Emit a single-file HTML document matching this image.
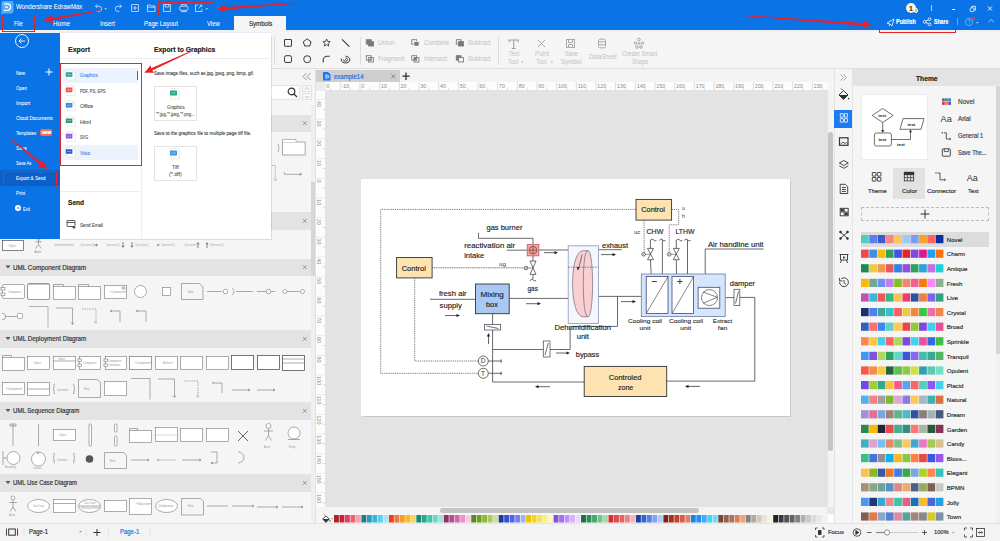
<!DOCTYPE html>
<html><head><meta charset="utf-8">
<style>
*{margin:0;padding:0;box-sizing:border-box}
html,body{width:1000px;height:541px;overflow:hidden;background:#f5f5f5;font-family:"Liberation Sans",sans-serif;color:#333}
.a{position:absolute}
.t{position:absolute;white-space:nowrap;line-height:1;-webkit-text-stroke:0.18px currentColor}
svg{position:absolute;overflow:visible}
.w{color:#fff}
.gr{color:#b9b9b9}
</style></head><body>
<!-- ===== TITLE BAR ===== -->
<div class="a" style="left:0;top:0;width:1000px;height:30px;background:#0a73e6"></div>
<div class="a" style="left:0;top:30px;width:1000px;height:2px;background:#f0f0f0"></div>
<!-- logo -->
<svg style="left:0;top:0" width="15" height="15"><path d="M3 1h8.5a2 2 0 0 1 2 2v8.5a2 2 0 0 1-2 2H4l-2.5 1.2V3a2 2 0 0 1 1.5-2z" fill="#5aacf7"/><path d="M4 3.8h3.3a3.3 3.3 0 0 1 0 6.6H4 M5 7.1h3" stroke="#fff" stroke-width="1.3" fill="none"/></svg>
<!-- quick access icons -->
<svg style="left:92px;top:2px" width="130" height="12" fill="none" stroke="#e6f0fd" stroke-width="0.75">
 <path d="M3.5 4.2h3.5a2.6 2.6 0 0 1 0 5.2H4.5 M3.5 4.2l1.8-1.8 M3.5 4.2l1.8 1.8"/>
 <path d="M12.3 6.3h2.6l-1.3 1.4z" fill="#cfe0fb" stroke="none"/>
 <path d="M29.5 4.2H26a2.6 2.6 0 0 0 0 5.2h1.5 M29.5 4.2l-1.8-1.8 M29.5 4.2l-1.8 1.8"/>
 <rect x="39.5" y="2.5" width="7" height="7" rx="0.5"/><path d="M43 4v4 M41 6h4"/>
 <path d="M55.5 3h2.8l1 1h3.7v5.5h-7.5z M55.5 5.2h7.5"/>
 <path d="M71.5 2.5h7v7h-7z M73.2 2.5v2.5h3.6v-2.5"/>
 <rect x="87.5" y="4.2" width="8.5" height="4.2" rx="1.8"/><path d="M89.3 4.2v-1.5h5v1.5 M89.3 8.4v1.3h5v-1.3"/>
 <path d="M106 3h-2.5v6.5h6.5v-2.5 M106.5 6.5l3.2-3.2 M107.7 3h2v2"/>
 <path d="M113.5 6.3h2.6l-1.3 1.4z" fill="#cfe0fb" stroke="none"/>
 <path d="M126 4.5v1 M126 7v1" stroke="#9cc3f4"/>
</svg>
<!-- red box on quick icons -->
<div class="a" style="left:158px;top:2px;width:56px;height:14px;border:1.8px solid #e3242b"></div>
<!-- tabs -->
<div class="a" style="left:1.5px;top:15px;width:33.5px;height:16.8px;border:1.8px solid #e3242b"></div>
<div class="a" style="left:234px;top:16px;width:52px;height:16px;background:#f5f5f5"></div>
<!-- right side title -->
<div class="a" style="left:905.5px;top:3px;width:10px;height:10px;border-radius:50%;background:#fdf3dc"></div>
<div class="a" style="left:913.5px;top:8px;width:4.5px;height:4.5px;border-radius:50%;background:#f5a623;border:0.7px solid #fff"></div>
<div class="a" style="left:931px;top:4.5px;width:1px;height:6px;background:#a8cdf6"></div>
<div class="a" style="left:952px;top:9.3px;width:3.2px;height:1px;background:#fff"></div>
<svg style="left:968px;top:4px" width="10" height="10" fill="none" stroke="#fff" stroke-width="0.8"><rect x="2.2" y="3.8" width="3.8" height="3.8" rx="0.8"/><path d="M3.8 3.8v-1.5h3.8v3.8h-1.5"/></svg>
<svg style="left:986px;top:4px" width="8" height="8" fill="none" stroke="#fff" stroke-width="0.9"><path d="M2 2.5l4 4 M6 2.5l-4 4"/></svg>
<div class="a" style="left:879px;top:13px;width:77px;height:20px;border:1.8px solid #e3242b"></div>
<svg style="left:886px;top:18px" width="10" height="9" fill="none" stroke="#fff" stroke-width="0.8"><path d="M1 5l7-4-2 7-2-2z M4 6l-1 2"/></svg>
<svg style="left:922px;top:17px" width="11" height="10" fill="none" stroke="#fff" stroke-width="0.8"><circle cx="2.8" cy="4.8" r="1.4"/><circle cx="7.6" cy="2.2" r="1.4"/><circle cx="7.6" cy="7.4" r="1.4"/><path d="M4 4.1l2.3-1.2 M4 5.5l2.3 1.2"/></svg>
<div class="a" style="left:956.5px;top:18px;width:1px;height:7px;background:#6aa6ee"></div>
<svg style="left:964px;top:16px" width="20" height="14" fill="none" stroke="#8dbcf3" stroke-width="0.7"><circle cx="5" cy="6" r="3.6"/><path d="M4 4.9a1.1 1.1 0 1 1 1.5 1v0.8 M5 7.6v0.5"/><circle cx="9.6" cy="2.4" r="1.3" fill="#f04040" stroke="none"/><path d="M12 6h2.6l-1.3 1.4z" fill="#cfe0fb" stroke="none"/></svg>
<svg style="left:986px;top:17px" width="10" height="8" fill="none" stroke="#cfe0fb" stroke-width="0.8"><path d="M2.5 5l2.6-2.5 2.6 2.5"/></svg>
<!-- ===== TOOLBAR ===== -->
<div class="a" style="left:0;top:68px;width:1000px;height:1px;background:#dedede"></div>
<div class="a" style="left:274px;top:37px;width:1px;height:28px;background:#dcdcdc"></div>
<div class="a" style="left:360px;top:37px;width:1px;height:28px;background:#dcdcdc"></div>
<div class="a" style="left:498px;top:37px;width:1px;height:28px;background:#dcdcdc"></div>
<svg style="left:282px;top:37px" width="72" height="28" fill="none" stroke="#3a3a3a" stroke-width="1">
 <rect x="2.5" y="2.5" width="7" height="6.8" rx="0.4"/>
 <path d="M25.2 1.9L29.1 4.8 27.7 9H22.7L21.3 4.8z" stroke-linejoin="round"/>
 <path d="M44.6 2l1 2.4 2.6.3-2 1.7.6 2.6-2.2-1.3-2.2 1.3.6-2.6-2-1.7 2.6-.3z" stroke-linejoin="round" stroke-width="0.9"/>
 <path d="M60 2.4L67.4 9.6" stroke-width="1.1"/>
 <rect x="2.5" y="18.7" width="7" height="6.8" rx="1.6"/>
 <circle cx="25.2" cy="22.2" r="3.5"/>
 <path d="M41.2 25.6V23.2a4 4 0 0 1 4-4h2.6" stroke-width="1.1"/>
 <path d="M59.4 21.6A4.3 3.4 0 1 0 63.6 19.2" stroke-width="1"/><path d="M61.4 22.6a2.1 1.7 0 1 0 2.1-1.7" stroke-width="0.9"/><circle cx="63.4" cy="22.6" r="0.5" fill="#3a3a3a" stroke="none"/>
</svg>
<svg style="left:0;top:0" width="500" height="70" stroke-width="0.9"><rect x="366.3" y="39.7" width="4.8" height="4.4" fill="#7a7a7a" stroke="#7a7a7a"/><rect x="368.6" y="41.6" width="4.8" height="4.4" fill="#7a7a7a" stroke="#7a7a7a"/><rect x="411.8" y="39.7" width="4.8" height="4.4" fill="none" stroke="#7a7a7a"/><rect x="414.1" y="41.6" width="4.8" height="4.4" fill="#7a7a7a" stroke="#f5f5f5" stroke-width="0.8"/><rect x="414.6" y="42.1" width="3.8" height="3.4" fill="#7a7a7a"/><rect x="456.3" y="39.7" width="4.8" height="4.4" fill="none" stroke="#7a7a7a"/><rect x="458.6" y="41.6" width="4.8" height="4.4" fill="#7a7a7a" stroke="#7a7a7a"/><rect x="366.3" y="55.7" width="4.8" height="4.4" fill="none" stroke="#7a7a7a"/><rect x="368.6" y="57.6" width="4.8" height="4.4" fill="none" stroke="#7a7a7a"/><path d="M368.6 60.1h2.5v-2.5" stroke="#7a7a7a" fill="none"/><rect x="411.8" y="55.7" width="4.8" height="4.4" fill="none" stroke="#7a7a7a"/><rect x="414.1" y="57.6" width="4.8" height="4.4" fill="none" stroke="#7a7a7a"/><rect x="414.1" y="57.6" width="2.5" height="2.5" fill="#7a7a7a"/><rect x="456.3" y="55.7" width="4.8" height="4.4" fill="#7a7a7a" stroke="#7a7a7a"/><rect x="458.6" y="57.6" width="4.8" height="4.4" fill="#f5f5f5" stroke="#7a7a7a"/></svg>
<svg style="left:500px;top:36px" width="160" height="16" fill="none" stroke="#a8a8a8" stroke-width="1">
 <path d="M9.2 6.2v-2.2h9v2.2 M13.7 4v8.5 M11.8 12.5h3.8" stroke="#a0a0a0" stroke-width="1.1"/>
 <path d="M38 4l7 7 M45 4l-7 7"/>
 <rect x="66.5" y="3.5" width="8" height="8"/><path d="M68.5 3.5v3h4v-3 M68.5 11.5v-3h4v3"/>
 <ellipse cx="102" cy="4.5" rx="3.5" ry="1.5"/><path d="M98.5 4.5v6a3.5 1.5 0 0 0 7 0v-6 M98.5 7.5a3.5 1.5 0 0 0 7 0"/>
 <circle cx="139" cy="3.5" r="1.3"/><circle cx="135.5" cy="7" r="1.3"/><circle cx="142.5" cy="7" r="1.3"/><circle cx="137" cy="11" r="1.3"/><circle cx="141" cy="11" r="1.3"/><circle cx="139" cy="7.5" r="1"/>
</svg>
<svg style="left:518px;top:60px" width="40" height="5" fill="#b0b0b0"><path d="M3 1.5h2.6l-1.3 1.5z M32.5 1.5h2.6l-1.3 1.5z"/></svg>
<!-- ===== LEFT PANEL ===== -->
<div class="a" style="left:0;top:69px;width:316px;height:454px;background:#f5f5f5;border-right:1px solid #e2e2e2"></div>
<svg style="left:302px;top:72px" width="10" height="9" fill="none" stroke="#777" stroke-width="0.8"><path d="M4.5 1l-3.5 3.5 3.5 3.5 M8.5 1l-3.5 3.5 3.5 3.5"/></svg>
<div class="a" style="left:200px;top:85px;width:100px;height:15px;background:#fff;border:1px solid #e4e4e4"></div>
<svg style="left:287px;top:87px" width="11" height="11" fill="none" stroke="#333" stroke-width="1.2"><circle cx="4.5" cy="4.5" r="3.3"/><path d="M7 7l3 3"/></svg>
<div class="a" style="left:302px;top:85px;width:10px;height:7px;border:1px solid #e2e2e2;background:#f8f8f8"></div>
<div class="a" style="left:302px;top:93px;width:10px;height:7px;border:1px solid #e2e2e2;background:#f8f8f8"></div>
<svg style="left:302px;top:85px" width="10" height="16" fill="none" stroke="#999" stroke-width="0.6"><path d="M3 4.5l2-2 2 2 M3 11l2 2 2-2"/></svg>
<!-- scrollbar -->
<div class="a" style="left:311px;top:105px;width:4px;height:418px;background:#efefef"></div>
<div class="a" style="left:311px;top:182px;width:4px;height:94px;background:#d6d6d6"></div>
<!-- section headers -->
<div class="a" style="left:0;top:115px;width:311px;height:17px;background:#e3e3e3"></div>
<div class="a" style="left:0;top:212px;width:311px;height:18px;background:#e3e3e3"></div>
<div class="a" style="left:0;top:259px;width:311px;height:17px;background:#e3e3e3"></div>
<div class="a" style="left:0;top:330px;width:311px;height:18px;background:#e3e3e3"></div>
<div class="a" style="left:0;top:402px;width:311px;height:18px;background:#e3e3e3"></div>
<div class="a" style="left:0;top:474px;width:311px;height:18px;background:#e3e3e3"></div>
<svg style="left:0;top:0" width="316" height="523">
 <g fill="#555"><path d="M5.5 265.5h5l-2.5 3z"/><path d="M5.5 337h5l-2.5 3z"/><path d="M5.5 409h5l-2.5 3z"/><path d="M5.5 481h5l-2.5 3z"/></g>
 <g stroke="#777" stroke-width="0.7"><path d="M303 121.5l3.6 3.6 M306.6 121.5l-3.6 3.6"/><path d="M303 219l3.6 3.6 M306.6 219l-3.6 3.6"/><path d="M303 265.5l3.6 3.6 M306.6 265.5l-3.6 3.6"/><path d="M303 337l3.6 3.6 M306.6 337l-3.6 3.6"/><path d="M303 409l3.6 3.6 M306.6 409l-3.6 3.6"/><path d="M303 481l3.6 3.6 M306.6 481l-3.6 3.6"/></g>
</svg>
<svg style="left:0;top:0" width="316" height="523" fill="none" stroke="#777" stroke-width="0.6">
 <!-- partial shapes visible right of menu (y 133-212) -->
 <path d="M277.5 144l1 0.5v2.5l1 0.8-1 0.8v2.5l-1 0.5" stroke="#888"/>
 <path d="M282.5 142h22.7v13h-22.7z" fill="#fff" stroke="#888" stroke-width="0.7"/><path d="M282.5 142v-2.6h13l1 2.6" fill="#fff" stroke="#888" stroke-width="0.6"/>
 <path d="M272 165.5h3.3v14 M273.5 178.5l1.8 2.5 1.8-2.5" stroke-dasharray="1.3 0.9" stroke="#777"/>
 <path d="M284.2 174.3h17.5 M299.5 173l2.2 1.3-2.2 1.3 M284.3 172v2" stroke="#777"/>
 <!-- row below menu -->
 <rect x="2.5" y="240.5" width="21" height="10" stroke="#333" fill="#fff"/>
 <circle cx="38.5" cy="238.5" r="1.6" fill="#fff"/><path d="M38.5 240v4.5 M35.5 241.8h6 M38.5 244.5l-3 4 M38.5 244.5l3 4"/>
 <path d="M54 244.3h20 M54 245.3h20" stroke="#bbb" stroke-width="0.6"/>
 <path d="M94 245h3 M96 244l1.5 1-1.5 1" stroke="#666" stroke-width="0.8"/>
 <path d="M123 242v5 M121.8 245.8l1.2 1.5 1.2-1.5 M132 242v5 M130.8 245.8l1.2 1.5 1.2-1.5 M198 243v5 M196.8 244.2l1.2-1.5 1.2 1.5 M207 243v5 M205.8 244.2l1.2-1.5 1.2 1.5" stroke="#555" stroke-width="0.7"/>
 <path d="M157 245h3 M158.5 244l-1.5 1 1.5 1" stroke="#777" stroke-width="0.6"/>
 <!-- component row1 -->
 <rect fill="#fff" x="2.5" y="284.5" width="22" height="14" rx="1.5"/><rect fill="#fff" x="1" y="287.5" width="4" height="2.5"/><rect fill="#fff" x="1" y="293" width="4" height="2.5"/>
 <rect fill="#fff" x="27.5" y="283.5" width="22" height="16" rx="1.5" stroke="#555"/><path d="M28.5 284.5h21v15" stroke="#999"/>
 <rect fill="#fff" x="53.5" y="286.5" width="22" height="13"/><path d="M53.5 286.5v-2h10v2"/>
 <rect fill="#fff" x="78.5" y="286.5" width="22" height="13"/><path d="M78.5 286.5v-2h10v2"/>
 <rect fill="#fff" x="104.5" y="285.5" width="22" height="13"/><path d="M122 287h3v2h-3z"/>
 <circle fill="#fff" cx="140.5" cy="291.5" r="6"/>
 <rect fill="#fff" x="162.5" y="287.5" width="8" height="8"/>
 <path d="M181.5 283.5h18l3.5 3.5v12.5h-21.5z"/>
 <path d="M207 291.5h15"/><circle fill="#fff" cx="225.5" cy="291.5" r="2.3"/>
 <path d="M232 288a4 4 0 0 1 0 7 M236 291.5h17"/>
 <path d="M257 291.5h18"/><circle fill="#fff" cx="268.5" cy="291.5" r="2.3"/>
 <circle fill="#fff" cx="285" cy="291.5" r="2"/><path d="M287 291.5h13"/><circle fill="#fff" cx="302.5" cy="291.5" r="2"/>
 <!-- component row2 -->
 <path d="M2 313a3.5 3.5 0 0 1 0 7 M5 316.5h12"/><rect fill="#fff" x="17.5" y="313.5" width="5" height="5" rx="1"/>
 <path d="M29 306.5h19v21" stroke="#888"/>
 <path d="M56 308h16.5v16 M71 322.5l1.5 2 1.5-2"/>
 <path d="M82 309h14v14 M94.5 321.5l1.5 2 1.5-2" stroke-dasharray="1.5 1"/>
 <path d="M110 311h10v11 M110.5 311l1.5-1 M110.5 311l1.5 1"/>
 <path d="M136 311h10v11 M136.5 311l1.5-1 M136.5 311l1.5 1"/>
 <!-- deployment row1 -->
 <rect fill="#fff" x="2.5" y="357.5" width="22" height="13"/><path d="M2.5 357.5v-2h9v2"/>
 <rect fill="#fff" x="27.5" y="356.5" width="22" height="13"/>
 <rect fill="#fff" x="53.5" y="356.5" width="22" height="13"/><path d="M53.5 361h22"/>
 <rect fill="#fff" x="79.5" y="356.5" width="21" height="13"/><rect fill="#fff" x="78" y="359" width="3.5" height="2.5"/><rect fill="#fff" x="78" y="364" width="3.5" height="2.5"/>
 <rect fill="#fff" x="105.5" y="356.5" width="21" height="13"/><rect fill="#fff" x="104" y="359" width="3.5" height="2.5"/><rect fill="#fff" x="104" y="364" width="3.5" height="2.5"/>
 <rect fill="#fff" x="129.5" y="356.5" width="22" height="13"/><rect fill="#fff" x="129.5" y="356.5" width="22" height="13"/>
 <rect fill="#fff" x="155.5" y="356.5" width="22" height="13"/>
 <rect fill="#fff" x="180.5" y="356.5" width="22" height="13"/>
 <rect fill="#fff" x="206.5" y="356.5" width="22" height="13"/>
 <rect fill="#fff" x="231.5" y="355.5" width="22" height="14" stroke="#555" stroke-width="0.8"/>
 <rect fill="#fff" x="257.5" y="355.5" width="22" height="14" stroke="#555" stroke-width="0.8"/>
 <rect fill="#fff" x="282.5" y="355.5" width="22" height="15" stroke="#555" stroke-width="0.8"/><path d="M282.5 359h22 M282.5 363h22"/>
 <!-- deployment row2 -->
 <rect fill="#fff" x="2.5" y="382.5" width="22" height="12"/>
 <rect fill="#fff" x="27.5" y="382.5" width="22" height="13"/><path d="M27.5 389h22"/>
 <path d="M55 384a1 1 0 0 0 -1 1v3l-1 1 1 1v3a1 1 0 0 0 1 1 M73 384a1 1 0 0 1 1 1v3l1 1-1 1v3a1 1 0 0 1-1 1"/>
 <path d="M78.5 379.5h19l3 3v15h-22z"/>
 <rect fill="#fff" x="104.5" y="381.5" width="22" height="14"/>
 <path d="M131 378.5h19v21"/>
 <path d="M158 379h16.5v18 M173 395.5l1.5 2 1.5-2"/>
 <path d="M184 381h14v16 M196.5 395.5l1.5 2 1.5-2" stroke-dasharray="1.5 1"/>
 <path d="M212 383h10v10 M212.5 383l1.5-1"/>
 <path d="M232 390h18 M248 389l2 1-2 1 M257 390h18 M273 389l2 1-2 1"/>
 <!-- sequence row1 -->
 <path d="M10 424h6 M13 424v22 M10 424v2h6v-2"/>
 <path d="M38.5 424v22"/>
 <rect fill="#fff" x="53.5" y="429.5" width="22" height="11"/>
 <rect fill="#fff" x="89" y="424" width="2.5" height="22" rx="1"/>
 <rect fill="#fff" x="114.5" y="424" width="2.5" height="8" rx="1"/><rect fill="#fff" x="114.5" y="436" width="2.5" height="10" rx="1"/>
 <rect fill="#fff" x="129.5" y="430.5" width="22" height="12"/><path d="M129.5 430.5v-2h8v2"/>
 <rect fill="#fff" x="155.5" y="427.5" width="22" height="14"/><path d="M155.5 435h22" stroke-dasharray="1 1"/>
 <rect fill="#fff" x="180.5" y="428.5" width="22" height="13"/>
 <rect fill="#fff" x="206.5" y="428.5" width="22" height="13"/>
 <path d="M238 431l10 10 M248 431l-10 10" stroke="#555" stroke-width="0.9"/>
 <circle fill="#fff" cx="268.5" cy="426" r="2.5"/><path d="M268.5 428.5v7 M264 431h9 M268.5 435.5l-3 5 M268.5 435.5l3 5"/>
 <circle fill="#fff" cx="294" cy="433" r="6"/><path d="M288 439.5h12"/>
 <!-- sequence row2 -->
 <path d="M3 451v14 M3 458h4"/><circle fill="#fff" cx="13.5" cy="458" r="6.5"/>
 <circle fill="#fff" cx="38.5" cy="459" r="7"/><path d="M37 452l2 1-2 1"/>
 <path d="M55 453a1 1 0 0 0 -1 1v3l-1 1 1 1v3a1 1 0 0 0 1 1 M73 453a1 1 0 0 1 1 1v3l1 1-1 1v3a1 1 0 0 1-1 1"/>
 <circle cx="89.5" cy="459" r="3.8" fill="#555" stroke="none"/>
 <path d="M104.5 452.5h19l3 3v13h-22z"/>
 <path d="M131 460h18 M147 459l2 1-2 1"/>
 <path d="M157 460h19 M159 459l-2 1 2 1" stroke-dasharray="1 0.6"/>
 <path d="M182 460h19 M199 459l2 1-2 1"/>
 <path d="M211 452h6v11h-6 M213 462l-2 1 2 1"/>
 <path d="M238 452a6 5.5 0 0 1 0 11"/>
 <!-- use case row -->
 <circle fill="#fff" cx="13" cy="498" r="2"/><path d="M13 500v7 M9 502.5h8 M13 507l-3 4.5 M13 507l3 4.5"/>
 <ellipse fill="#fff" cx="38.5" cy="506" rx="11" ry="6.5"/>
 <rect fill="#fff" x="53.5" y="499.5" width="22" height="13"/><path d="M53.5 503.5h22"/>
 <ellipse fill="#fff" cx="89.5" cy="506" rx="11" ry="6.5"/><path d="M79 506h21"/>
 <rect fill="#fff" x="104.5" y="500.5" width="22" height="11"/>
 <rect fill="#fff" x="129.5" y="498.5" width="22" height="16"/>
 <ellipse fill="#fff" cx="166.5" cy="506" rx="11" ry="6.5"/>
 <path d="M181.5 498.5h19l3 3v13.5h-22z"/>
 <path d="M207 506h21 M232 506h21 M252 505l2 1-2 1 M257 507h21 M276 506l2 1-2 1 M282 507h21 M301 506l2 1-2 1"/>
</svg>
<g></g>
<svg style="left:0;top:0" width="316" height="523" font-family="Liberation Sans" fill="#999" font-size="2.6">
 <text x="8.5" y="246.5">Object</text>
 <text x="8" y="293">Component</text>
 <text x="110" y="293">«Component»</text>
 <text x="188" y="293">Note</text>
 <text x="33.5" y="364">Object</text>
 <text x="83" y="364">Component</text>
 <text x="108" y="362">Component</text><text x="109" y="366">Database</text>
 <text x="58" y="359.5">Object</text>
 <text x="135" y="364">«Component»</text>
 <text x="162" y="364">«Artifact»</text>
 <text x="6" y="390">«Deployment»</text>
 <text x="84" y="390">Note</text>
 <text x="57" y="390.5">Container</text>
 <text x="59" y="436">Object</text>
 <text x="264" y="448">Actor</text>
 <text x="289" y="448">Entity</text>
 <text x="5" y="468">Boundary</text>
 <text x="33" y="469">Control</text>
 <text x="57" y="460.5">Creation</text>
 <text x="110" y="461.5">Note</text>
 <text x="9" y="516">Actor</text>
 <text x="33" y="507">Use Case</text>
 <text x="84" y="504">Use Case</text><text x="81" y="509">Extension Points</text>
 <text x="136" y="505">«Subsystem»</text>
 <text x="158" y="507">Collaboration</text>
 <text x="188" y="507">Note</text>
</svg>
<svg style="left:0;top:0" width="316" height="523" font-family="Liberation Sans" fill="#aaa" font-size="2.7">
 <text x="80" y="246">Operation()</text>
 <text x="106" y="246">Operation()</text>
 <text x="135" y="246">Operation()</text>
 <text x="161" y="246">Operation()</text>
 <text x="184" y="246">Operation()</text>
 <text x="210" y="246">Operation()</text>
 <text x="34.5" y="253" fill="#888" font-size="3">Actor</text>
</svg>
<!-- ===== TABBAR / RULERS / CANVAS ===== -->
<div class="a" style="left:316px;top:69px;width:518px;height:13px;background:#f3f3f3"></div>
<div class="a" style="left:316.4px;top:70px;width:83.3px;height:12px;background:#cfcfcf"></div>
<svg style="left:322px;top:71px" width="10" height="10"><path d="M1 1h5l2.5 2.5v6h-7.5z" fill="#1a7af0"/><path d="M3 4.2h2.4a1.4 1.4 0 0 1 0 2.8h-2.4 M3.5 5.6h2" stroke="#fff" stroke-width="0.8" fill="none"/></svg>
<svg style="left:390px;top:73px" width="7" height="7" fill="none" stroke="#666" stroke-width="0.7"><path d="M1.3 1.3l4 4 M5.3 1.3l-4 4"/></svg>
<svg style="left:401px;top:71px" width="10" height="10" fill="none" stroke="#333" stroke-width="1.3"><path d="M5 1.5v7.5 M1.3 5.2h7.4"/></svg>
<div class="a" style="left:316px;top:82px;width:512px;height:9px;background:#fcfcfc;border-bottom:1px solid #e4e4e4"></div>
<div class="a" style="left:316px;top:91px;width:10px;height:416px;background:#fcfcfc;border-right:1px solid #e4e4e4"></div>
<div class="a" style="left:326px;top:91px;width:501px;height:416px;background:#e3e3e3"></div>
<svg style="left:0;top:0" width="1000" height="541">
<g stroke="#d0d0d0" stroke-width="0.7">
<path d="M330.49 87.5V91"/>
<path d="M340.33 82V91"/>
<path d="M350.16 87.5V91"/>
<path d="M360.00 82V91"/>
<path d="M369.83 87.5V91"/>
<path d="M379.67 82V91"/>
<path d="M389.50 87.5V91"/>
<path d="M399.34 82V91"/>
<path d="M409.18 87.5V91"/>
<path d="M419.01 82V91"/>
<path d="M428.84 87.5V91"/>
<path d="M438.68 82V91"/>
<path d="M448.51 87.5V91"/>
<path d="M458.35 82V91"/>
<path d="M468.19 87.5V91"/>
<path d="M478.02 82V91"/>
<path d="M487.85 87.5V91"/>
<path d="M497.69 82V91"/>
<path d="M507.52 87.5V91"/>
<path d="M517.36 82V91"/>
<path d="M527.20 87.5V91"/>
<path d="M537.03 82V91"/>
<path d="M546.87 87.5V91"/>
<path d="M556.70 82V91"/>
<path d="M566.54 87.5V91"/>
<path d="M576.37 82V91"/>
<path d="M586.21 87.5V91"/>
<path d="M596.04 82V91"/>
<path d="M605.88 87.5V91"/>
<path d="M615.71 82V91"/>
<path d="M625.55 87.5V91"/>
<path d="M635.38 82V91"/>
<path d="M645.22 87.5V91"/>
<path d="M655.05 82V91"/>
<path d="M664.88 87.5V91"/>
<path d="M674.72 82V91"/>
<path d="M684.56 87.5V91"/>
<path d="M694.39 82V91"/>
<path d="M704.23 87.5V91"/>
<path d="M714.06 82V91"/>
<path d="M723.90 87.5V91"/>
<path d="M733.73 82V91"/>
<path d="M743.57 87.5V91"/>
<path d="M753.40 82V91"/>
<path d="M763.24 87.5V91"/>
<path d="M773.07 82V91"/>
<path d="M782.91 87.5V91"/>
<path d="M792.74 82V91"/>
<path d="M802.58 87.5V91"/>
<path d="M812.41 82V91"/>
<path d="M822.25 87.5V91"/>
<path d="M316 99.62H326" stroke="#e2e2e2"/>
<path d="M322.5 109.46H326"/>
<path d="M316 119.29H326" stroke="#e2e2e2"/>
<path d="M322.5 129.12H326"/>
<path d="M316 138.96H326" stroke="#e2e2e2"/>
<path d="M322.5 148.80H326"/>
<path d="M316 158.63H326" stroke="#e2e2e2"/>
<path d="M322.5 168.47H326"/>
<path d="M316 178.30H326" stroke="#e2e2e2"/>
<path d="M322.5 188.14H326"/>
<path d="M316 197.97H326" stroke="#e2e2e2"/>
<path d="M322.5 207.81H326"/>
<path d="M316 217.64H326" stroke="#e2e2e2"/>
<path d="M322.5 227.48H326"/>
<path d="M316 237.31H326" stroke="#e2e2e2"/>
<path d="M322.5 247.15H326"/>
<path d="M316 256.98H326" stroke="#e2e2e2"/>
<path d="M322.5 266.81H326"/>
<path d="M316 276.65H326" stroke="#e2e2e2"/>
<path d="M322.5 286.49H326"/>
<path d="M316 296.32H326" stroke="#e2e2e2"/>
<path d="M322.5 306.16H326"/>
<path d="M316 315.99H326" stroke="#e2e2e2"/>
<path d="M322.5 325.82H326"/>
<path d="M316 335.66H326" stroke="#e2e2e2"/>
<path d="M322.5 345.50H326"/>
<path d="M316 355.33H326" stroke="#e2e2e2"/>
<path d="M322.5 365.17H326"/>
<path d="M316 375.00H326" stroke="#e2e2e2"/>
<path d="M322.5 384.83H326"/>
<path d="M316 394.67H326" stroke="#e2e2e2"/>
<path d="M322.5 404.50H326"/>
<path d="M316 414.34H326" stroke="#e2e2e2"/>
<path d="M322.5 424.18H326"/>
<path d="M316 434.01H326" stroke="#e2e2e2"/>
<path d="M322.5 443.85H326"/>
<path d="M316 453.68H326" stroke="#e2e2e2"/>
<path d="M322.5 463.51H326"/>
<path d="M316 473.35H326" stroke="#e2e2e2"/>
<path d="M322.5 483.19H326"/>
<path d="M316 493.02H326" stroke="#e2e2e2"/>
<path d="M322.5 502.86H326"/>
</g>
<g fill="#8a8a8a" font-size="5.3" font-family="Liberation Sans">
<text x="341.6" y="88.2">-10</text>
<text x="361.3" y="88.2">0</text>
<text x="381.0" y="88.2">10</text>
<text x="400.6" y="88.2">20</text>
<text x="420.3" y="88.2">30</text>
<text x="440.0" y="88.2">40</text>
<text x="459.7" y="88.2">50</text>
<text x="479.3" y="88.2">60</text>
<text x="499.0" y="88.2">70</text>
<text x="518.7" y="88.2">80</text>
<text x="538.3" y="88.2">90</text>
<text x="558.0" y="88.2">100</text>
<text x="577.7" y="88.2">110</text>
<text x="597.3" y="88.2">120</text>
<text x="617.0" y="88.2">130</text>
<text x="636.7" y="88.2">140</text>
<text x="656.3" y="88.2">150</text>
<text x="676.0" y="88.2">160</text>
<text x="695.7" y="88.2">170</text>
<text x="715.4" y="88.2">180</text>
<text x="735.0" y="88.2">190</text>
<text x="754.7" y="88.2">200</text>
<text x="774.4" y="88.2">210</text>
<text x="794.0" y="88.2">220</text>
<text x="813.7" y="88.2">230</text>
<text x="326.5" y="88.2">0</text>
<text transform="translate(317.2 100.9) rotate(90)" x="0" y="0">40</text>
<text transform="translate(317.2 120.6) rotate(90)" x="0" y="0">30</text>
<text transform="translate(317.2 140.3) rotate(90)" x="0" y="0">20</text>
<text transform="translate(317.2 159.9) rotate(90)" x="0" y="0">10</text>
<text transform="translate(317.2 179.6) rotate(90)" x="0" y="0">0</text>
<text transform="translate(317.2 199.3) rotate(90)" x="0" y="0">10</text>
<text transform="translate(317.2 218.9) rotate(90)" x="0" y="0">20</text>
<text transform="translate(317.2 238.6) rotate(90)" x="0" y="0">30</text>
<text transform="translate(317.2 258.3) rotate(90)" x="0" y="0">40</text>
<text transform="translate(317.2 278.0) rotate(90)" x="0" y="0">50</text>
<text transform="translate(317.2 297.6) rotate(90)" x="0" y="0">60</text>
<text transform="translate(317.2 317.3) rotate(90)" x="0" y="0">70</text>
<text transform="translate(317.2 337.0) rotate(90)" x="0" y="0">80</text>
<text transform="translate(317.2 356.6) rotate(90)" x="0" y="0">90</text>
<text transform="translate(317.2 376.3) rotate(90)" x="0" y="0">100</text>
<text transform="translate(317.2 396.0) rotate(90)" x="0" y="0">110</text>
<text transform="translate(317.2 415.6) rotate(90)" x="0" y="0">120</text>
<text transform="translate(317.2 435.3) rotate(90)" x="0" y="0">130</text>
<text transform="translate(317.2 455.0) rotate(90)" x="0" y="0">140</text>
<text transform="translate(317.2 474.7) rotate(90)" x="0" y="0">150</text>
<text transform="translate(317.2 494.3) rotate(90)" x="0" y="0">160</text>
</g>
<rect x="316" y="82" width="9.5" height="9" fill="#ececec"/>
</svg>
<div class="a" style="left:361px;top:178.5px;width:429px;height:237.5px;background:#fff;box-shadow:0.5px 0.5px 1px rgba(0,0,0,0.12)"></div>
<div class="a" style="left:827px;top:91px;width:7px;height:416px;background:#f3f3f3;border-left:1px solid #e6e6e6"></div>
<div class="a" style="left:828px;top:132px;width:5px;height:319px;background:#c4c4c4;border-radius:3px"></div>
<div class="a" style="left:316px;top:507px;width:518px;height:7px;background:#f4f4f4"></div>
<div class="a" style="left:440px;top:508px;width:259px;height:5px;background:#c4c4c4;border-radius:3px"></div>
<div class="a" style="left:827px;top:507px;width:7px;height:7px;background:#e8e8e8"></div>
<div class="a" style="left:316px;top:514px;width:518px;height:9px;background:#f6f6f6"></div>
<svg style="left:321px;top:514px" width="13" height="9"><path d="M5 1.8l3.3 3.3-3.3 3.3-3.3-3.3z" fill="none" stroke="#333" stroke-width="0.9"/><path d="M1.7 5.1h6.6l-3.3 3.3z" fill="#333"/><path d="M4.2 1.5l-1-1" stroke="#333" stroke-width="0.7"/><circle cx="9" cy="7" r="0.7" fill="#333"/><path d="M10 4.3h2l-1 1.2z" fill="#666"/></svg>
<svg style="left:334px;top:515px" width="500" height="8">
<rect x="0.00" y="0" width="4.89" height="7.5" fill="#a52a22"/>
<rect x="5.49" y="0" width="4.89" height="7.5" fill="#c8203c"/>
<rect x="10.98" y="0" width="4.89" height="7.5" fill="#e0405e"/>
<rect x="16.47" y="0" width="4.89" height="7.5" fill="#e8607a"/>
<rect x="21.96" y="0" width="4.89" height="7.5" fill="#f2a4ac"/>
<rect x="27.45" y="0" width="4.89" height="7.5" fill="#1e7b8e"/>
<rect x="32.94" y="0" width="4.89" height="7.5" fill="#2a9fb8"/>
<rect x="38.43" y="0" width="4.89" height="7.5" fill="#35b6da"/>
<rect x="43.92" y="0" width="4.89" height="7.5" fill="#5cd0f0"/>
<rect x="49.41" y="0" width="4.89" height="7.5" fill="#a8e4f6"/>
<rect x="54.90" y="0" width="4.89" height="7.5" fill="#e84020"/>
<rect x="60.39" y="0" width="4.89" height="7.5" fill="#f07a40"/>
<rect x="65.88" y="0" width="4.89" height="7.5" fill="#f59c24"/>
<rect x="71.37" y="0" width="4.89" height="7.5" fill="#fbba1c"/>
<rect x="76.86" y="0" width="4.89" height="7.5" fill="#fcd262"/>
<rect x="82.35" y="0" width="4.89" height="7.5" fill="#1a8a72"/>
<rect x="87.84" y="0" width="4.89" height="7.5" fill="#25a98a"/>
<rect x="93.33" y="0" width="4.89" height="7.5" fill="#3dc8aa"/>
<rect x="98.82" y="0" width="4.89" height="7.5" fill="#6ad8ca"/>
<rect x="104.31" y="0" width="4.89" height="7.5" fill="#9ae6dc"/>
<rect x="109.80" y="0" width="4.89" height="7.5" fill="#8a3262"/>
<rect x="115.29" y="0" width="4.89" height="7.5" fill="#b05088"/>
<rect x="120.78" y="0" width="4.89" height="7.5" fill="#da62b2"/>
<rect x="126.27" y="0" width="4.89" height="7.5" fill="#e892c8"/>
<rect x="131.76" y="0" width="4.89" height="7.5" fill="#f2cce2"/>
<rect x="137.25" y="0" width="4.89" height="7.5" fill="#5a8a1c"/>
<rect x="142.74" y="0" width="4.89" height="7.5" fill="#6ca222"/>
<rect x="148.23" y="0" width="4.89" height="7.5" fill="#8cba32"/>
<rect x="153.72" y="0" width="4.89" height="7.5" fill="#aaca62"/>
<rect x="159.21" y="0" width="4.89" height="7.5" fill="#c8e09a"/>
<rect x="164.70" y="0" width="4.89" height="7.5" fill="#1a3aa2"/>
<rect x="170.19" y="0" width="4.89" height="7.5" fill="#3252d2"/>
<rect x="175.68" y="0" width="4.89" height="7.5" fill="#5262e2"/>
<rect x="181.17" y="0" width="4.89" height="7.5" fill="#7282f0"/>
<rect x="186.66" y="0" width="4.89" height="7.5" fill="#a2b2f8"/>
<rect x="192.15" y="0" width="4.89" height="7.5" fill="#f0c200"/>
<rect x="197.64" y="0" width="4.89" height="7.5" fill="#f8d222"/>
<rect x="203.13" y="0" width="4.89" height="7.5" fill="#fce242"/>
<rect x="208.62" y="0" width="4.89" height="7.5" fill="#fdf082"/>
<rect x="214.11" y="0" width="4.89" height="7.5" fill="#fff8c2"/>
<rect x="219.60" y="0" width="4.89" height="7.5" fill="#8252e2"/>
<rect x="225.09" y="0" width="4.89" height="7.5" fill="#a272f2"/>
<rect x="230.58" y="0" width="4.89" height="7.5" fill="#c292f6"/>
<rect x="236.07" y="0" width="4.89" height="7.5" fill="#d8b2f8"/>
<rect x="241.56" y="0" width="4.89" height="7.5" fill="#ecd8fc"/>
<rect x="247.05" y="0" width="4.89" height="7.5" fill="#1a7242"/>
<rect x="252.55" y="0" width="4.89" height="7.5" fill="#2a9252"/>
<rect x="258.04" y="0" width="4.89" height="7.5" fill="#42aa6a"/>
<rect x="263.53" y="0" width="4.89" height="7.5" fill="#72c292"/>
<rect x="269.02" y="0" width="4.89" height="7.5" fill="#a2d8b2"/>
<rect x="274.51" y="0" width="4.89" height="7.5" fill="#d03232"/>
<rect x="280.00" y="0" width="4.89" height="7.5" fill="#e04a4a"/>
<rect x="285.49" y="0" width="4.89" height="7.5" fill="#e86262"/>
<rect x="290.98" y="0" width="4.89" height="7.5" fill="#f08282"/>
<rect x="296.47" y="0" width="4.89" height="7.5" fill="#f8b2b2"/>
<rect x="301.96" y="0" width="4.89" height="7.5" fill="#1a42a2"/>
<rect x="307.45" y="0" width="4.89" height="7.5" fill="#3262d2"/>
<rect x="312.94" y="0" width="4.89" height="7.5" fill="#5282ea"/>
<rect x="318.43" y="0" width="4.89" height="7.5" fill="#82a2f2"/>
<rect x="323.92" y="0" width="4.89" height="7.5" fill="#b2caf8"/>
<rect x="329.41" y="0" width="4.89" height="7.5" fill="#822212"/>
<rect x="334.90" y="0" width="4.89" height="7.5" fill="#a83222"/>
<rect x="340.39" y="0" width="4.89" height="7.5" fill="#c24232"/>
<rect x="345.88" y="0" width="4.89" height="7.5" fill="#d26248"/>
<rect x="351.37" y="0" width="4.89" height="7.5" fill="#e28262"/>
<rect x="356.86" y="0" width="4.89" height="7.5" fill="#1a82e2"/>
<rect x="362.35" y="0" width="4.89" height="7.5" fill="#2292f2"/>
<rect x="367.84" y="0" width="4.89" height="7.5" fill="#42aaf8"/>
<rect x="373.33" y="0" width="4.89" height="7.5" fill="#42d2f2"/>
<rect x="378.82" y="0" width="4.89" height="7.5" fill="#72daf8"/>
<rect x="384.31" y="0" width="4.89" height="7.5" fill="#724a32"/>
<rect x="389.80" y="0" width="4.89" height="7.5" fill="#926252"/>
<rect x="395.29" y="0" width="4.89" height="7.5" fill="#b27252"/>
<rect x="400.78" y="0" width="4.89" height="7.5" fill="#d28262"/>
<rect x="406.27" y="0" width="4.89" height="7.5" fill="#f2a272"/>
<rect x="411.76" y="0" width="4.89" height="7.5" fill="#828282"/>
<rect x="417.25" y="0" width="4.89" height="7.5" fill="#b2aaa2"/>
<rect x="422.74" y="0" width="4.89" height="7.5" fill="#d2cab8"/>
<rect x="428.23" y="0" width="4.89" height="7.5" fill="#eae2d2"/>
<rect x="433.72" y="0" width="4.89" height="7.5" fill="#f8f2e2"/>
<rect x="439.21" y="0" width="4.89" height="7.5" fill="#222222"/>
<rect x="444.70" y="0" width="4.89" height="7.5" fill="#3a3a3a"/>
<rect x="450.19" y="0" width="4.89" height="7.5" fill="#525252"/>
<rect x="455.68" y="0" width="4.89" height="7.5" fill="#626262"/>
<rect x="461.17" y="0" width="4.89" height="7.5" fill="#828282"/>
<rect x="466.66" y="0" width="4.89" height="7.5" fill="#b2b2b2"/>
<rect x="472.15" y="0" width="4.89" height="7.5" fill="#c8c8c8"/>
<rect x="477.64" y="0" width="4.89" height="7.5" fill="#dadada"/>
<rect x="483.13" y="0" width="4.89" height="7.5" fill="#e8e8e8"/>
<rect x="488.62" y="0" width="4.89" height="7.5" fill="#f2f2f2"/>
<rect x="494.11" y="0" width="4.89" height="7.5" fill="#ffffff"/>
</svg>
<!-- ===== DIAGRAM ===== -->
<svg style="left:0;top:0" width="1000" height="541" font-family="Liberation Sans" >
<g fill="none" stroke="#555" stroke-width="0.75" stroke-dasharray="1.3 0.9">
 <path d="M636 209.4H380.7V373.3H478.3"/>
 <path d="M414.7 278V361H478.3"/>
 <path d="M644.1 220.1V252.5"/>
 <path d="M671.6 209.6H678.7V224.8H669.2V252.5"/>
</g>
<path d="M432.1 267.8H524.3" stroke="#777" stroke-width="1" stroke-dasharray="1.2 0.6" fill="none"/>
<g fill="none" stroke="#444" stroke-width="0.8">
 <!-- gas burner feed -->
 <path d="M478.5 232.9V238.3H533V244.4"/>
 <path d="M506.7 250.2H527.2"/>
 <path d="M538.9 250H568.2"/>
 <path d="M598.4 249.7H621.7"/>
 <path d="M533 256V261 M533 274.4V279"/>
 <path d="M530 281a2 2 0 0 1 3-1.5 2 2 0 0 0 3 1"/>
 <!-- main air path -->
 <path d="M430 299.3H475.5"/>
 <path d="M509.2 298.4H568.2"/>
 <path d="M598.4 296.4H641.3"/>
 <path d="M617.5 296.4V326.4H570.1V349.5H492.6"/>
 <path d="M492.6 313.7V382H584.2"/>
 <path d="M488.3 361H502 M501 359.3v3.4 M488.3 373.3H502 M501 371.6v3.4"/>
 <path d="M666.7 381.1H754.8V297.4H739.8 M725.2 297.6H734"/>
 <path d="M705.2 274V249H763.5"/>
 <!-- pipes -->
 <path d="M650.4 259.7L651.3 276.4 M650.4 248.4V240 M662.4 240V276.4 M676.3 259.7L676.6 276.4 M676.3 248.4V240 M687.5 240V276.4"/>
 <path d="M650.4 240.5a2 2 0 0 1 3-1 2 2 0 0 0 3 1 M659.5 240.5a2 2 0 0 1 3-1 2 2 0 0 0 3 1 M676.3 240.5a2 2 0 0 1 3-1 2 2 0 0 0 3 1 M684.5 240.5a2 2 0 0 1 3-1 2 2 0 0 0 3 1"/>
</g>
<!-- arrows -->
<g stroke="#222" stroke-width="0.7" fill="#222">
 <path d="M445 315.5h12" /><path d="M460 315.5l-3.5-1.6v3.2z" stroke="none"/>
 <path d="M526 303.7h12"/><path d="M541 303.7l-3.5-1.6v3.2z" stroke="none"/>
 <path d="M544 252.7h11"/><path d="M558 252.7l-3.5-1.6v3.2z" stroke="none"/>
 <path d="M601 254.6h12"/><path d="M616 254.6l-3.5-1.6v3.2z" stroke="none"/>
 <path d="M621 301.6h12"/><path d="M636 301.6l-3.5-1.6v3.2z" stroke="none"/>
 <path d="M556 353h11"/><path d="M570 353l-3.5-1.6v3.2z" stroke="none"/>
 <path d="M538 386.7h12"/><path d="M535 386.7l3.5-1.6v3.2z" stroke="none"/>
 <path d="M688 386.4h12"/><path d="M685 386.4l3.5-1.6v3.2z" stroke="none"/>
 <path d="M488.5 344v-8"/><path d="M488.5 333l-1.6 3.5h3.2z" stroke="none"/>
 <path d="M581 256q-1 8-3 13"/><path d="M577.5 271l-1.5-3.5 3 0.5z" stroke="none"/>
</g>
<!-- boxes -->
<rect x="396.6" y="257.5" width="35.5" height="20.4" fill="#fde2b2" stroke="#333" stroke-width="0.9"/>
<rect x="636" y="199.4" width="35.6" height="20.7" fill="#fde2b2" stroke="#333" stroke-width="0.9"/>
<rect x="584.2" y="366.4" width="82.5" height="30.1" fill="#fde2b2" stroke="#333" stroke-width="0.9"/>
<rect x="475.5" y="284" width="33.7" height="29.7" fill="#a9c9f5" stroke="#333" stroke-width="0.9"/>
<rect x="527.2" y="244.4" width="11.7" height="11.5" fill="#f2a4a4" stroke="#b05050" stroke-width="0.7"/>
<circle cx="533" cy="250.1" r="3.8" fill="none" stroke="#602020" stroke-width="0.6"/>
<path d="M529.2 250.1h7.6 M533 246.3v7.6" stroke="#602020" stroke-width="0.6"/>
<!-- valves -->
<g fill="#fff" stroke="#333" stroke-width="0.7">
 <path d="M530 261h6l-6 13.4h6z"/>
 <path d="M647.5 248.4h6l-6 11.3h6z"/>
 <path d="M673.3 248.4h6l-6 11.3h6z"/>
 <circle cx="526" cy="268" r="1.8"/><circle cx="643.6" cy="254.3" r="1.8"/><circle cx="669.2" cy="254.3" r="1.8"/>
</g>
<path d="M525 269l2-2 M642.6 255.3l2-2 M668.2 255.3l2-2 M527.8 268H533 M645.4 254.3H650.4 M671 254.3H676.3" stroke="#333" stroke-width="0.5"/>
<!-- D T circles -->
<circle cx="483.3" cy="361" r="5" fill="#fff" stroke="#444" stroke-width="0.8"/>
<circle cx="483.3" cy="373.3" r="5" fill="#fff" stroke="#444" stroke-width="0.8"/>
<!-- dampers -->
<rect x="484.4" y="324.4" width="16.2" height="5.6" fill="#fff" stroke="#556" stroke-width="0.8"/>
<path d="M486.5 326l12 2.5" stroke="#333" stroke-width="0.7"/>
<rect x="543.3" y="341" width="6.7" height="16" fill="#fff" stroke="#556" stroke-width="0.8"/>
<path d="M545 355l3.3-12" stroke="#333" stroke-width="0.7"/>
<rect x="734" y="289.3" width="5.8" height="16.2" fill="#fff" stroke="#556" stroke-width="0.8"/>
<path d="M735.5 303.5l3-12" stroke="#333" stroke-width="0.7"/>
<!-- dehumidifier -->
<rect x="568.2" y="245.8" width="30.2" height="77.7" fill="#f4f6fb" stroke="#8a96c0" stroke-width="0.8"/>
<path d="M583.5 250.7 C575 250.7 572.6 270 572.6 283.7 C572.6 297 575 316.7 583.5 316.7 L588 316.7 C591 316.7 592.6 300 592.6 283.7 C592.6 267 591 250.7 588 250.7Z" fill="#f8cfd2" stroke="#556" stroke-width="0.6"/>
<path d="M588 250.7 C584.5 250.7 583.3 267 583.3 283.7 C583.3 300 584.5 316.7 588 316.7" fill="none" stroke="#556" stroke-width="0.6"/>
<path d="M568.2 267.2H598.4" stroke="#333" stroke-width="0.6" stroke-dasharray="1.5 1.2"/>
<path d="M582 254.5q-1.5 8-3.5 14" stroke="#222" stroke-width="0.6" fill="none"/><path d="M577.8 270.5l-1-3.6 2.8 0.8z" fill="#222"/>
<!-- AHU -->
<rect x="641.3" y="274" width="83.9" height="42.6" fill="#d5e5fa" stroke="#6a7aa8" stroke-width="0.8"/>
<rect x="646.2" y="276.4" width="21.8" height="37.1" fill="#fff" stroke="#3a4a7a" stroke-width="0.8"/>
<rect x="672" y="276.4" width="21.6" height="37.1" fill="#fff" stroke="#3a4a7a" stroke-width="0.8"/>
<path d="M646.5 313L668 276.6 M672.3 313L693.6 276.6" stroke="#333" stroke-width="0.6"/>
<path d="M651.8 281.5h5 M677.3 281.5h5.2 M679.9 279v5.2" stroke="#222" stroke-width="0.85"/>
<rect x="698.1" y="287.3" width="21.7" height="20.9" fill="#fff" stroke="#3a4a7a" stroke-width="0.8"/>
<circle cx="709.5" cy="297.6" r="8" fill="none" stroke="#333" stroke-width="0.6"/>
<path d="M703 292L717.3 297.3 703 303.3" fill="none" stroke="#333" stroke-width="0.6"/>
<!-- texts -->
<g fill="#222" font-size="7.6" stroke="#222" stroke-width="0.15">
 <text x="401.7" y="270.6" textLength="24.2" lengthAdjust="spacingAndGlyphs">Control</text>
 <text x="641.3" y="212.3" textLength="23.6" lengthAdjust="spacingAndGlyphs">Control</text>
 <text x="486.5" y="230" textLength="35.9" lengthAdjust="spacingAndGlyphs">gas burner</text>
 <text x="464.2" y="247.8" textLength="51" lengthAdjust="spacingAndGlyphs">reactivation air</text>
 <text x="464.2" y="257.5" textLength="20" lengthAdjust="spacingAndGlyphs">intake</text>
 <text x="438.9" y="295.5" textLength="27.8" lengthAdjust="spacingAndGlyphs">fresh air</text>
 <text x="439.6" y="307.6" textLength="22.2" lengthAdjust="spacingAndGlyphs">supply</text>
 <text x="480.4" y="297.3" textLength="23.4" lengthAdjust="spacingAndGlyphs">Mixing</text>
 <text x="486" y="306.7" textLength="11.8" lengthAdjust="spacingAndGlyphs">box</text>
 <text x="527.5" y="290.5" textLength="10.5" lengthAdjust="spacingAndGlyphs">gas</text>
 <text x="602" y="248" textLength="26" lengthAdjust="spacingAndGlyphs">exhaust</text>
 <text x="554.4" y="330" textLength="56.6" lengthAdjust="spacingAndGlyphs">Dehumidification</text>
 <text x="576.7" y="338.9" textLength="12.2" lengthAdjust="spacingAndGlyphs">unit</text>
 <text x="575.8" y="357.3" textLength="23.4" lengthAdjust="spacingAndGlyphs">bypass</text>
 <text x="608.8" y="379.6" textLength="32.6" lengthAdjust="spacingAndGlyphs">Controled</text>
 <text x="617.9" y="389.5" textLength="15.4" lengthAdjust="spacingAndGlyphs">zone</text>
 <text x="646.5" y="233.5" textLength="16.9" lengthAdjust="spacingAndGlyphs">CHW</text>
 <text x="675.5" y="234.3" textLength="18.9" lengthAdjust="spacingAndGlyphs">LTHW</text>
 <text x="707.9" y="246.8" textLength="55.6" lengthAdjust="spacingAndGlyphs">Air handline unit</text>
 <text x="729.8" y="286" textLength="25.3" lengthAdjust="spacingAndGlyphs">damper</text>
</g>
<g fill="#333" font-size="5.2">
 <text x="499" y="265.5" textLength="7" lengthAdjust="spacingAndGlyphs">ug</text>
 <text x="634" y="233.5" textLength="6.2" lengthAdjust="spacingAndGlyphs">uc</text>
 <text x="682" y="210">u</text>
 <text x="682" y="218.2">h</text>
 <text x="480.8" y="363.3" font-size="6.5">D</text>
 <text x="481" y="375.6" font-size="6.5">T</text>
</g>
<g fill="#3a3030" font-size="5.6" stroke="#3a3030" stroke-width="0.12">
 <text x="628" y="322.8" textLength="34" lengthAdjust="spacingAndGlyphs">Cooling coil</text>
 <text x="639.5" y="330.3" textLength="10.9" lengthAdjust="spacingAndGlyphs">unit</text>
 <text x="668.9" y="322.8" textLength="34" lengthAdjust="spacingAndGlyphs">Cooling coil</text>
 <text x="680.3" y="330.3" textLength="10.9" lengthAdjust="spacingAndGlyphs">unit</text>
 <text x="712.8" y="322.8" textLength="19.4" lengthAdjust="spacingAndGlyphs">Extract</text>
 <text x="717.8" y="330.3" textLength="9.4" lengthAdjust="spacingAndGlyphs">fan</text>
</g>
</svg>
<!-- ===== RIGHT PANEL ===== -->
<div class="a" style="left:834px;top:69px;width:18px;height:454px;background:#f5f5f5;border-left:1px solid #e4e4e4"></div>
<div class="a" style="left:852px;top:69px;width:148px;height:454px;background:#f5f5f5;border-left:1px solid #e4e4e4"></div>
<div class="a" style="left:852px;top:69px;width:148px;height:16.5px;background:#e3e3e3"></div>
<div class="a" style="left:996px;top:85px;width:4px;height:438px;background:#f0f0f0"></div><div class="a" style="left:996px;top:86px;width:4px;height:268px;background:#d6d6d6"></div>
<div class="a" style="left:834px;top:109.5px;width:18px;height:18px;background:#1a7cf0"></div>
<svg style="left:834px;top:69px" width="18" height="230" fill="none" stroke="#333" stroke-width="0.9">
 <path d="M6.5 5.5l3 3-3 3 M9.5 5.5l3 3-3 3" stroke="#888" stroke-width="0.7"/>
 <path d="M9.5 21.5l4.5 4.5-4.5 4.5-4.5-4.5z" stroke-width="1"/><path d="M5 26h9l-4.5 4.5z" fill="#333" stroke="none"/><path d="M8.5 21l-1.5-1.5"/><circle cx="14.6" cy="29.6" r="0.8" fill="#333" stroke="none"/>
 <g stroke="#fff" stroke-width="0.8"><rect x="6.3" y="44.6" width="3" height="3.6" rx="0.2"/><rect x="10.5" y="44.6" width="3" height="3.6" rx="0.2"/><rect x="6.3" y="49.6" width="3" height="3.6" rx="0.2"/><rect x="10.5" y="49.6" width="3" height="3.6" rx="0.2"/></g>
 <rect x="5.5" y="68.8" width="8.5" height="7.5" stroke-width="1.2"/><path d="M6.5 75l2.5-2 2 1.5 1.5-1 1.2 1.2" stroke-width="0.8"/>
 <path d="M9.8 91.5l4.5 2.5-4.5 2.5-4.5-2.5z M5.3 96.8l4.5 2.5 4.5-2.5" stroke-width="0.9"/>
 <path d="M6.2 115.3h5l2.5 2.5v6.7h-7.5z M8 118.5h3.8 M8 120.5h3.8 M8 122.5h3.8" stroke-width="0.9"/>
 <rect x="6.2" y="139.3" width="8" height="7.5" stroke-width="0.9"/><path d="M6.2 143h8 M10.2 139.3v7.5" stroke-width="0.8"/><rect x="6.8" y="140" width="3" height="2.6" fill="#333" stroke="none"/><rect x="10.8" y="143.6" width="3" height="2.6" fill="#333" stroke="none"/>
 <path d="M7 163.5l6 5.5 M13 163.5l-6 5.5" stroke-width="0.9"/><circle cx="6.5" cy="163" r="0.9" fill="#333"/><circle cx="13.5" cy="163" r="0.9" fill="#333"/><circle cx="6.5" cy="169.5" r="0.9" fill="#333"/><circle cx="13.5" cy="169.5" r="0.9" fill="#333"/>
 <path d="M5.5 185.5h9 M6.5 185.5v5.5h7v-5.5 M7.5 191l-1 3 M12.5 191l1 3" stroke-width="0.9"/><path d="M9.2 187v3l2.3-1.5z" fill="#333" stroke="none"/>
 <path d="M5.6 213a4.4 4.4 0 1 0 1.4-3 M5.4 208.8v3h3 M10 211v2.8l2 1.6" stroke-width="0.9"/>
</svg>
<div class="a" style="left:861.4px;top:93.6px;width:67px;height:66.6px;background:#fff;border:1px solid #ececec"></div>
<svg style="left:861px;top:93px" width="68" height="68" font-family="Liberation Sans">
 <g fill="#fff" stroke="#333" stroke-width="0.7">
  <path d="M21.7 15.5l10.5 7-10.5 7-10.5-7z"/>
  <rect x="13.4" y="40" width="17" height="13" rx="2"/>
  <path d="M42 25.6h21l-3 10.7h-21z"/>
 </g>
 <path d="M21.7 29.5v8 M30.4 46.5h19.1v-8" stroke="#333" stroke-width="0.7" fill="none"/>
 <path d="M21.7 40l-1.5-3h3z M49.5 36.3l-1.5 3h3z" fill="#333"/>
 <g fill="#222" font-size="4.4" font-weight="bold"><text x="17.3" y="24.3">text</text><text x="17.5" y="48.2">text</text><text x="46.5" y="32.6">text</text><text x="36" y="52.5">text</text></g>
</svg>
<svg style="left:940px;top:96px" width="14" height="62" fill="none" stroke="#333" stroke-width="0.8" font-family="Liberation Sans">
 <g stroke="none"><rect x="2" y="2.3" width="2.8" height="3.1" fill="#6a6a7a"/><rect x="5.1" y="2.3" width="2.8" height="3.1" fill="#3aa060"/><rect x="8.2" y="2.3" width="2.8" height="3.1" fill="#3a80e0"/>
 <rect x="2" y="5.8" width="2.8" height="3.1" fill="#d03a7a"/><rect x="5.1" y="5.8" width="2.8" height="3.1" fill="#f08030"/><rect x="8.2" y="5.8" width="2.8" height="3.1" fill="#7a4ab0"/></g>
 <text x="0.5" y="26.2" font-size="9.2" fill="#333" stroke="none">Aa</text>
 <path d="M4 36.8H6.3V43H10.5 M9.6 42l1.2 1-1.2 1" stroke-width="0.8"/><circle cx="2.3" cy="36.8" r="0.7" fill="#333" stroke="none"/>
 <rect x="2.3" y="52.8" width="8" height="7.4" rx="0.8" stroke-width="0.9"/><path d="M4.3 52.8v2.8h4v-2.8" stroke-width="0.8"/>
</svg>
<div class="a" style="left:893px;top:168.3px;width:32px;height:31px;background:#e2e2e2"></div>
<svg style="left:860px;top:168px" width="130" height="16" fill="none" stroke="#333" stroke-width="0.8" font-family="Liberation Sans">
 <g stroke-width="0.9"><rect x="12.3" y="4.5" width="3.6" height="3.6" rx="0.3"/><rect x="17.3" y="4.5" width="3.6" height="3.6" rx="0.3"/><rect x="12.3" y="9.5" width="3.6" height="3.6" rx="0.3"/><rect x="17.3" y="9.5" width="3.6" height="3.6" rx="0.3"/></g>
 <rect x="44.3" y="4.3" width="9.4" height="8.6"/><path d="M44.3 6.6h9.4 M44.3 9.6h9.4 M47.4 6.6v6.3 M50.6 6.6v6.3" stroke-width="0.7"/><rect x="44.3" y="4.3" width="9.4" height="2.3" fill="#333"/>
 <path d="M77.5 5H80V11.8H85.3 M84.3 10.8l1.2 1-1.2 1" stroke-width="0.8"/><circle cx="76" cy="5" r="0.7" fill="#333" stroke="none"/>
 <text x="106.8" y="12.6" font-size="9" fill="#333" stroke="none">Aa</text>
</svg>
<div class="a" style="left:861.3px;top:207px;width:127.5px;height:14.4px;border:1px dashed #bdbdbd"></div>
<svg style="left:919px;top:208px" width="12" height="12"><path d="M6 1.5v9 M1.5 6h9" stroke="#333" stroke-width="1"/></svg>
<div class="a" style="left:861px;top:232px;width:128px;height:14.5px;background:#dcdcdc"></div>
<svg style="left:861px;top:235px" width="84" height="290">
<rect x="0.0" y="0.0" width="7.7" height="8.2" fill="#4ecdc4"/>
<rect x="8.3" y="0.0" width="7.7" height="8.2" fill="#5b7ff0"/>
<rect x="16.6" y="0.0" width="7.7" height="8.2" fill="#3d5bc8"/>
<rect x="24.9" y="0.0" width="7.7" height="8.2" fill="#f98585"/>
<rect x="33.2" y="0.0" width="7.7" height="8.2" fill="#fdc85a"/>
<rect x="41.5" y="0.0" width="7.7" height="8.2" fill="#9ccaf8"/>
<rect x="49.8" y="0.0" width="7.7" height="8.2" fill="#7e9cf4"/>
<rect x="58.1" y="0.0" width="7.7" height="8.2" fill="#fca021"/>
<rect x="66.4" y="0.0" width="7.7" height="8.2" fill="#fa6464"/>
<rect x="74.7" y="0.0" width="7.7" height="8.2" fill="#0d2e9e"/>
<rect x="0.0" y="14.6" width="7.7" height="8.2" fill="#f04848"/>
<rect x="8.3" y="14.6" width="7.7" height="8.2" fill="#3a8ff0"/>
<rect x="16.6" y="14.6" width="7.7" height="8.2" fill="#fdb80a"/>
<rect x="24.9" y="14.6" width="7.7" height="8.2" fill="#2ea05a"/>
<rect x="33.2" y="14.6" width="7.7" height="8.2" fill="#4050f0"/>
<rect x="41.5" y="14.6" width="7.7" height="8.2" fill="#e8202a"/>
<rect x="49.8" y="14.6" width="7.7" height="8.2" fill="#8048e0"/>
<rect x="58.1" y="14.6" width="7.7" height="8.2" fill="#e01890"/>
<rect x="66.4" y="14.6" width="7.7" height="8.2" fill="#20a0f0"/>
<rect x="74.7" y="14.6" width="7.7" height="8.2" fill="#fc7010"/>
<rect x="0.0" y="29.2" width="7.7" height="8.2" fill="#208858"/>
<rect x="8.3" y="29.2" width="7.7" height="8.2" fill="#f0c848"/>
<rect x="16.6" y="29.2" width="7.7" height="8.2" fill="#f09850"/>
<rect x="24.9" y="29.2" width="7.7" height="8.2" fill="#e85858"/>
<rect x="33.2" y="29.2" width="7.7" height="8.2" fill="#3080e8"/>
<rect x="41.5" y="29.2" width="7.7" height="8.2" fill="#9050d8"/>
<rect x="49.8" y="29.2" width="7.7" height="8.2" fill="#30a060"/>
<rect x="58.1" y="29.2" width="7.7" height="8.2" fill="#30a0d8"/>
<rect x="66.4" y="29.2" width="7.7" height="8.2" fill="#c070e0"/>
<rect x="74.7" y="29.2" width="7.7" height="8.2" fill="#20d0d8"/>
<rect x="0.0" y="43.8" width="7.7" height="8.2" fill="#fcb808"/>
<rect x="8.3" y="43.8" width="7.7" height="8.2" fill="#70a890"/>
<rect x="16.6" y="43.8" width="7.7" height="8.2" fill="#7090f0"/>
<rect x="24.9" y="43.8" width="7.7" height="8.2" fill="#c080f0"/>
<rect x="33.2" y="43.8" width="7.7" height="8.2" fill="#80c020"/>
<rect x="41.5" y="43.8" width="7.7" height="8.2" fill="#f08870"/>
<rect x="49.8" y="43.8" width="7.7" height="8.2" fill="#f06090"/>
<rect x="58.1" y="43.8" width="7.7" height="8.2" fill="#fc7808"/>
<rect x="66.4" y="43.8" width="7.7" height="8.2" fill="#fc88fc"/>
<rect x="74.7" y="43.8" width="7.7" height="8.2" fill="#90b090"/>
<rect x="0.0" y="58.4" width="7.7" height="8.2" fill="#c050b8"/>
<rect x="8.3" y="58.4" width="7.7" height="8.2" fill="#38b8d8"/>
<rect x="16.6" y="58.4" width="7.7" height="8.2" fill="#f05858"/>
<rect x="24.9" y="58.4" width="7.7" height="8.2" fill="#38b880"/>
<rect x="33.2" y="58.4" width="7.7" height="8.2" fill="#fcc050"/>
<rect x="41.5" y="58.4" width="7.7" height="8.2" fill="#e84068"/>
<rect x="49.8" y="58.4" width="7.7" height="8.2" fill="#3050a0"/>
<rect x="58.1" y="58.4" width="7.7" height="8.2" fill="#f08040"/>
<rect x="66.4" y="58.4" width="7.7" height="8.2" fill="#8060f0"/>
<rect x="74.7" y="58.4" width="7.7" height="8.2" fill="#30a080"/>
<rect x="0.0" y="73.0" width="7.7" height="8.2" fill="#1a3070"/>
<rect x="8.3" y="73.0" width="7.7" height="8.2" fill="#5080f0"/>
<rect x="16.6" y="73.0" width="7.7" height="8.2" fill="#40a898"/>
<rect x="24.9" y="73.0" width="7.7" height="8.2" fill="#38c0c8"/>
<rect x="33.2" y="73.0" width="7.7" height="8.2" fill="#f86060"/>
<rect x="41.5" y="73.0" width="7.7" height="8.2" fill="#f0c848"/>
<rect x="49.8" y="73.0" width="7.7" height="8.2" fill="#f08840"/>
<rect x="58.1" y="73.0" width="7.7" height="8.2" fill="#38c840"/>
<rect x="66.4" y="73.0" width="7.7" height="8.2" fill="#e870b0"/>
<rect x="74.7" y="73.0" width="7.7" height="8.2" fill="#f08848"/>
<rect x="0.0" y="87.6" width="7.7" height="8.2" fill="#3060c0"/>
<rect x="8.3" y="87.6" width="7.7" height="8.2" fill="#f87070"/>
<rect x="16.6" y="87.6" width="7.7" height="8.2" fill="#3a88f0"/>
<rect x="24.9" y="87.6" width="7.7" height="8.2" fill="#60d0c8"/>
<rect x="33.2" y="87.6" width="7.7" height="8.2" fill="#fdc858"/>
<rect x="41.5" y="87.6" width="7.7" height="8.2" fill="#e84848"/>
<rect x="49.8" y="87.6" width="7.7" height="8.2" fill="#90c840"/>
<rect x="58.1" y="87.6" width="7.7" height="8.2" fill="#8048d8"/>
<rect x="66.4" y="87.6" width="7.7" height="8.2" fill="#40d0f0"/>
<rect x="74.7" y="87.6" width="7.7" height="8.2" fill="#e85098"/>
<rect x="0.0" y="102.2" width="7.7" height="8.2" fill="#fc8850"/>
<rect x="8.3" y="102.2" width="7.7" height="8.2" fill="#fcc840"/>
<rect x="16.6" y="102.2" width="7.7" height="8.2" fill="#40d0f0"/>
<rect x="24.9" y="102.2" width="7.7" height="8.2" fill="#fc6060"/>
<rect x="33.2" y="102.2" width="7.7" height="8.2" fill="#b0d858"/>
<rect x="41.5" y="102.2" width="7.7" height="8.2" fill="#8048d8"/>
<rect x="49.8" y="102.2" width="7.7" height="8.2" fill="#40d0f0"/>
<rect x="58.1" y="102.2" width="7.7" height="8.2" fill="#e850a0"/>
<rect x="66.4" y="102.2" width="7.7" height="8.2" fill="#3a68e0"/>
<rect x="74.7" y="102.2" width="7.7" height="8.2" fill="#40c040"/>
<rect x="0.0" y="116.8" width="7.7" height="8.2" fill="#4098f0"/>
<rect x="8.3" y="116.8" width="7.7" height="8.2" fill="#8050e0"/>
<rect x="16.6" y="116.8" width="7.7" height="8.2" fill="#b0d860"/>
<rect x="24.9" y="116.8" width="7.7" height="8.2" fill="#30a060"/>
<rect x="33.2" y="116.8" width="7.7" height="8.2" fill="#60d8c8"/>
<rect x="41.5" y="116.8" width="7.7" height="8.2" fill="#3858e0"/>
<rect x="49.8" y="116.8" width="7.7" height="8.2" fill="#8868f0"/>
<rect x="58.1" y="116.8" width="7.7" height="8.2" fill="#40c0a8"/>
<rect x="66.4" y="116.8" width="7.7" height="8.2" fill="#38a890"/>
<rect x="74.7" y="116.8" width="7.7" height="8.2" fill="#50b860"/>
<rect x="0.0" y="131.4" width="7.7" height="8.2" fill="#fc5848"/>
<rect x="8.3" y="131.4" width="7.7" height="8.2" fill="#f09048"/>
<rect x="16.6" y="131.4" width="7.7" height="8.2" fill="#f8c848"/>
<rect x="24.9" y="131.4" width="7.7" height="8.2" fill="#206838"/>
<rect x="33.2" y="131.4" width="7.7" height="8.2" fill="#60c050"/>
<rect x="41.5" y="131.4" width="7.7" height="8.2" fill="#90c848"/>
<rect x="49.8" y="131.4" width="7.7" height="8.2" fill="#d0e048"/>
<rect x="58.1" y="131.4" width="7.7" height="8.2" fill="#30a0b0"/>
<rect x="66.4" y="131.4" width="7.7" height="8.2" fill="#60c8b0"/>
<rect x="74.7" y="131.4" width="7.7" height="8.2" fill="#70e0c8"/>
<rect x="0.0" y="146.0" width="7.7" height="8.2" fill="#7048e8"/>
<rect x="8.3" y="146.0" width="7.7" height="8.2" fill="#a0d030"/>
<rect x="16.6" y="146.0" width="7.7" height="8.2" fill="#30a890"/>
<rect x="24.9" y="146.0" width="7.7" height="8.2" fill="#fcc040"/>
<rect x="33.2" y="146.0" width="7.7" height="8.2" fill="#fc5890"/>
<rect x="41.5" y="146.0" width="7.7" height="8.2" fill="#60a0f0"/>
<rect x="49.8" y="146.0" width="7.7" height="8.2" fill="#f86868"/>
<rect x="58.1" y="146.0" width="7.7" height="8.2" fill="#50d0c0"/>
<rect x="66.4" y="146.0" width="7.7" height="8.2" fill="#9058f0"/>
<rect x="74.7" y="146.0" width="7.7" height="8.2" fill="#40d0f0"/>
<rect x="0.0" y="160.6" width="7.7" height="8.2" fill="#50b0f0"/>
<rect x="8.3" y="160.6" width="7.7" height="8.2" fill="#f88080"/>
<rect x="16.6" y="160.6" width="7.7" height="8.2" fill="#a0a0a0"/>
<rect x="24.9" y="160.6" width="7.7" height="8.2" fill="#80b830"/>
<rect x="33.2" y="160.6" width="7.7" height="8.2" fill="#e0a8d0"/>
<rect x="41.5" y="160.6" width="7.7" height="8.2" fill="#9078e0"/>
<rect x="49.8" y="160.6" width="7.7" height="8.2" fill="#fdc858"/>
<rect x="58.1" y="160.6" width="7.7" height="8.2" fill="#a0b8c8"/>
<rect x="66.4" y="160.6" width="7.7" height="8.2" fill="#40b0b0"/>
<rect x="74.7" y="160.6" width="7.7" height="8.2" fill="#d87048"/>
<rect x="0.0" y="175.2" width="7.7" height="8.2" fill="#a890d0"/>
<rect x="8.3" y="175.2" width="7.7" height="8.2" fill="#e07098"/>
<rect x="16.6" y="175.2" width="7.7" height="8.2" fill="#78a8e0"/>
<rect x="24.9" y="175.2" width="7.7" height="8.2" fill="#a08078"/>
<rect x="33.2" y="175.2" width="7.7" height="8.2" fill="#58b888"/>
<rect x="41.5" y="175.2" width="7.7" height="8.2" fill="#50b8c0"/>
<rect x="49.8" y="175.2" width="7.7" height="8.2" fill="#3050a0"/>
<rect x="58.1" y="175.2" width="7.7" height="8.2" fill="#888078"/>
<rect x="66.4" y="175.2" width="7.7" height="8.2" fill="#a8b0b8"/>
<rect x="74.7" y="175.2" width="7.7" height="8.2" fill="#485878"/>
<rect x="0.0" y="189.8" width="7.7" height="8.2" fill="#2a8a48"/>
<rect x="8.3" y="189.8" width="7.7" height="8.2" fill="#fcb808"/>
<rect x="16.6" y="189.8" width="7.7" height="8.2" fill="#202838"/>
<rect x="24.9" y="189.8" width="7.7" height="8.2" fill="#f04848"/>
<rect x="33.2" y="189.8" width="7.7" height="8.2" fill="#40b090"/>
<rect x="41.5" y="189.8" width="7.7" height="8.2" fill="#309080"/>
<rect x="49.8" y="189.8" width="7.7" height="8.2" fill="#f87878"/>
<rect x="58.1" y="189.8" width="7.7" height="8.2" fill="#a8b8a8"/>
<rect x="66.4" y="189.8" width="7.7" height="8.2" fill="#2a5838"/>
<rect x="74.7" y="189.8" width="7.7" height="8.2" fill="#883058"/>
<rect x="0.0" y="204.4" width="7.7" height="8.2" fill="#40b0c0"/>
<rect x="8.3" y="204.4" width="7.7" height="8.2" fill="#e0a0d0"/>
<rect x="16.6" y="204.4" width="7.7" height="8.2" fill="#78c0f0"/>
<rect x="24.9" y="204.4" width="7.7" height="8.2" fill="#e08868"/>
<rect x="33.2" y="204.4" width="7.7" height="8.2" fill="#80c088"/>
<rect x="41.5" y="204.4" width="7.7" height="8.2" fill="#fcc858"/>
<rect x="49.8" y="204.4" width="7.7" height="8.2" fill="#40a8d0"/>
<rect x="58.1" y="204.4" width="7.7" height="8.2" fill="#e878c0"/>
<rect x="66.4" y="204.4" width="7.7" height="8.2" fill="#a8c850"/>
<rect x="74.7" y="204.4" width="7.7" height="8.2" fill="#d8c090"/>
<rect x="0.0" y="219.0" width="7.7" height="8.2" fill="#38c080"/>
<rect x="8.3" y="219.0" width="7.7" height="8.2" fill="#4870e0"/>
<rect x="16.6" y="219.0" width="7.7" height="8.2" fill="#909090"/>
<rect x="24.9" y="219.0" width="7.7" height="8.2" fill="#08b0f0"/>
<rect x="33.2" y="219.0" width="7.7" height="8.2" fill="#fcb820"/>
<rect x="41.5" y="219.0" width="7.7" height="8.2" fill="#88c840"/>
<rect x="49.8" y="219.0" width="7.7" height="8.2" fill="#fc8040"/>
<rect x="58.1" y="219.0" width="7.7" height="8.2" fill="#e84848"/>
<rect x="66.4" y="219.0" width="7.7" height="8.2" fill="#3858e0"/>
<rect x="74.7" y="219.0" width="7.7" height="8.2" fill="#9858e8"/>
<rect x="0.0" y="233.6" width="7.7" height="8.2" fill="#fcc050"/>
<rect x="8.3" y="233.6" width="7.7" height="8.2" fill="#88b828"/>
<rect x="16.6" y="233.6" width="7.7" height="8.2" fill="#3858a8"/>
<rect x="24.9" y="233.6" width="7.7" height="8.2" fill="#e87820"/>
<rect x="33.2" y="233.6" width="7.7" height="8.2" fill="#4878e8"/>
<rect x="41.5" y="233.6" width="7.7" height="8.2" fill="#38a848"/>
<rect x="49.8" y="233.6" width="7.7" height="8.2" fill="#78a8e0"/>
<rect x="58.1" y="233.6" width="7.7" height="8.2" fill="#b0d028"/>
<rect x="66.4" y="233.6" width="7.7" height="8.2" fill="#fc8850"/>
<rect x="74.7" y="233.6" width="7.7" height="8.2" fill="#38c0c0"/>
<rect x="0.0" y="248.2" width="7.7" height="8.2" fill="#a89078"/>
<rect x="8.3" y="248.2" width="7.7" height="8.2" fill="#88a888"/>
<rect x="16.6" y="248.2" width="7.7" height="8.2" fill="#70a0a0"/>
<rect x="24.9" y="248.2" width="7.7" height="8.2" fill="#5890c8"/>
<rect x="33.2" y="248.2" width="7.7" height="8.2" fill="#e08888"/>
<rect x="41.5" y="248.2" width="7.7" height="8.2" fill="#f0a868"/>
<rect x="49.8" y="248.2" width="7.7" height="8.2" fill="#506080"/>
<rect x="58.1" y="248.2" width="7.7" height="8.2" fill="#98a860"/>
<rect x="66.4" y="248.2" width="7.7" height="8.2" fill="#806050"/>
<rect x="74.7" y="248.2" width="7.7" height="8.2" fill="#c8c8c8"/>
<rect x="0.0" y="262.8" width="7.7" height="8.2" fill="#4898f0"/>
<rect x="8.3" y="262.8" width="7.7" height="8.2" fill="#20387a"/>
<rect x="16.6" y="262.8" width="7.7" height="8.2" fill="#38a8d0"/>
<rect x="24.9" y="262.8" width="7.7" height="8.2" fill="#e88890"/>
<rect x="33.2" y="262.8" width="7.7" height="8.2" fill="#38c8a8"/>
<rect x="41.5" y="262.8" width="7.7" height="8.2" fill="#e06088"/>
<rect x="49.8" y="262.8" width="7.7" height="8.2" fill="#1a70b8"/>
<rect x="58.1" y="262.8" width="7.7" height="8.2" fill="#fcb828"/>
<rect x="66.4" y="262.8" width="7.7" height="8.2" fill="#4868d8"/>
<rect x="74.7" y="262.8" width="7.7" height="8.2" fill="#28a0e0"/>
<rect x="0.0" y="277.4" width="7.7" height="8.2" fill="#806050"/>
<rect x="8.3" y="277.4" width="7.7" height="8.2" fill="#e07850"/>
<rect x="16.6" y="277.4" width="7.7" height="8.2" fill="#88a8c8"/>
<rect x="24.9" y="277.4" width="7.7" height="8.2" fill="#5880d0"/>
<rect x="33.2" y="277.4" width="7.7" height="8.2" fill="#e088a0"/>
<rect x="41.5" y="277.4" width="7.7" height="8.2" fill="#58a098"/>
<rect x="49.8" y="277.4" width="7.7" height="8.2" fill="#a08878"/>
<rect x="58.1" y="277.4" width="7.7" height="8.2" fill="#888888"/>
<rect x="66.4" y="277.4" width="7.7" height="8.2" fill="#d8c830"/>
<rect x="74.7" y="277.4" width="7.7" height="8.2" fill="#8090a8"/>
</svg>
<!-- ===== STATUS BAR ===== -->
<div class="a" style="left:0;top:523px;width:1000px;height:18px;background:#f3f3f3;border-top:1px solid #e2e2e2"></div>
<svg style="left:0;top:524px" width="1000" height="17" fill="none" stroke="#333" stroke-width="0.8">
 <rect x="8.7" y="5" width="6.6" height="6.2" stroke-width="1"/><path d="M6.5 4.5v7.2 M17.5 4.5v7.2" stroke-width="0.9"/>
 <path d="M24 3v11 M86 3v11 M108.5 3v11 M150 3v11" stroke="#e0e0e0"/>
 <path d="M79 7h3l-1.5 1.6z" fill="#888" stroke="none"/>
 <path d="M97 5v7 M93.5 8.5h7" stroke-width="1"/>
 <path d="M815.5 6v-2h2 M822 4h2v2 M824 11v2h-2 M817.5 13h-2v-2"/><rect x="818" y="6" width="3.5" height="5" rx="1" fill="#333" stroke="none"/>
 <circle cx="857" cy="8.5" r="3.8"/><path d="M855.8 6.5v4l3-2z" fill="#333"/>
 <path d="M867 8.5h4.5"/><path d="M876 8.5h42" stroke="#ccc" stroke-width="1.2"/><path d="M876 8.5h11" stroke="#888" stroke-width="1.2"/>
 <circle cx="887" cy="8.5" r="2.6" fill="#fff" stroke="#777"/>
 <path d="M922 8.5h5 M924.5 6v5"/>
 <path d="M952 8h2.4l-1.2 1.3z" fill="#888" stroke="none"/>
 <path d="M964.5 6.5v-2.5h2.5 M970 4h2.5v2.5 M972.5 10.5v2.5h-2.5 M967 13h-2.5v-2.5"/>
 <rect x="976.5" y="4.5" width="8" height="8"/><path d="M978.5 8.5h4 M979.5 7.5l-1 1 1 1 M981.5 7.5l1 1-1 1"/>
</svg>
<!-- ===== FILE MENU ===== -->
<div class="a" style="left:0;top:32px;width:272px;height:1px;background:#e8eef8"></div>
<div class="a" style="left:0;top:33px;width:60px;height:206px;background:#0a73e6"></div>
<div class="a" style="left:60px;top:33px;width:211px;height:206px;background:#fff;box-shadow:0.5px 0.5px 1px rgba(0,0,0,0.1)"></div>
<svg style="left:14px;top:33px" width="16" height="16" fill="none" stroke="#fff" stroke-width="0.9"><circle cx="8" cy="8" r="6.5"/><path d="M11 8H5 M7.5 5.5L5 8l2.5 2.5"/></svg>
<svg style="left:45px;top:68px" width="8" height="8" fill="none" stroke="#fff" stroke-width="1"><path d="M4 0.5v7 M0.5 4h7"/></svg>
<div class="a" style="left:40px;top:129px;width:12px;height:7px;background:#f26b55;border-radius:2px"></div>
<div class="a" style="left:0;top:170px;width:60px;height:16px;background:#0b5fc6"></div>
<div class="a" style="left:3px;top:171px;width:54px;height:16.5px;border:1.8px solid #e3242b"></div>
<svg style="left:14px;top:204px" width="8" height="8"><circle cx="4" cy="4" r="3" fill="#fff"/><path d="M2.6 4h2.8 M4.4 3l1 1-1 1" stroke="#0a73e6" stroke-width="0.6" fill="none"/></svg>
<!-- export column -->
<div class="a" style="left:60px;top:58px;width:212px;height:1px;background:#eeeeee"></div>
<div class="a" style="left:141px;top:58px;width:1px;height:181px;background:#eeeeee"></div>
<div class="a" style="left:60px;top:191px;width:81px;height:1px;background:#eeeeee"></div>
<div class="a" style="left:63px;top:68px;width:75px;height:15px;background:#eaf3fe"></div>
<div class="a" style="left:137px;top:71px;width:1.2px;height:9px;background:#1a73e8"></div>
<div class="a" style="left:63px;top:145px;width:75px;height:15px;background:#eaf3fe"></div>
<svg style="left:64px;top:68px" width="14" height="95"><g transform="translate(0 0.0)"><path d="M3 2h5.8l2.4 2.4v7.6H3z" fill="#fff" stroke="#dcdcdc" stroke-width="0.6"/><path d="M8.8 2v2.4h2.4" fill="none" stroke="#dcdcdc" stroke-width="0.5"/><rect x="1.8" y="4.2" width="6.6" height="4.6" rx="0.6" fill="#2aa48a"/><path d="M3 6.5h4.2" stroke="#fff" stroke-width="0.6" opacity="0.7"/></g><g transform="translate(0 15.4)"><path d="M3 2h5.8l2.4 2.4v7.6H3z" fill="#fff" stroke="#dcdcdc" stroke-width="0.6"/><path d="M8.8 2v2.4h2.4" fill="none" stroke="#dcdcdc" stroke-width="0.5"/><rect x="1.8" y="4.2" width="6.6" height="4.6" rx="0.6" fill="#ee5a52"/><path d="M3 6.5h4.2" stroke="#fff" stroke-width="0.6" opacity="0.7"/></g><g transform="translate(0 30.8)"><path d="M3 2h5.8l2.4 2.4v7.6H3z" fill="#fff" stroke="#dcdcdc" stroke-width="0.6"/><path d="M8.8 2v2.4h2.4" fill="none" stroke="#dcdcdc" stroke-width="0.5"/><rect x="1.8" y="4.2" width="6.6" height="4.6" rx="0.6" fill="#3a86e8"/><path d="M3 6.5h4.2" stroke="#fff" stroke-width="0.6" opacity="0.7"/></g><g transform="translate(0 46.2)"><path d="M3 2h5.8l2.4 2.4v7.6H3z" fill="#fff" stroke="#dcdcdc" stroke-width="0.6"/><path d="M8.8 2v2.4h2.4" fill="none" stroke="#dcdcdc" stroke-width="0.5"/><rect x="1.8" y="4.2" width="6.6" height="4.6" rx="0.6" fill="#2a9a6a"/><path d="M3 6.5h4.2" stroke="#fff" stroke-width="0.6" opacity="0.7"/></g><g transform="translate(0 61.6)"><path d="M3 2h5.8l2.4 2.4v7.6H3z" fill="#fff" stroke="#dcdcdc" stroke-width="0.6"/><path d="M8.8 2v2.4h2.4" fill="none" stroke="#dcdcdc" stroke-width="0.5"/><rect x="1.8" y="4.2" width="6.6" height="4.6" rx="0.6" fill="#8a5ae6"/><path d="M3 6.5h4.2" stroke="#fff" stroke-width="0.6" opacity="0.7"/></g><g transform="translate(0 77.0)"><path d="M3 2h5.8l2.4 2.4v7.6H3z" fill="#fff" stroke="#dcdcdc" stroke-width="0.6"/><path d="M8.8 2v2.4h2.4" fill="none" stroke="#dcdcdc" stroke-width="0.5"/><rect x="1.8" y="4.2" width="6.6" height="4.6" rx="0.6" fill="#2a5ac8"/><path d="M3 6.5h4.2" stroke="#fff" stroke-width="0.6" opacity="0.7"/></g></svg>
<div class="a" style="left:59.5px;top:63px;width:82px;height:103px;border:1.8px solid #e3242b"></div>
<svg style="left:66px;top:219px" width="11" height="11" fill="none" stroke="#333" stroke-width="0.8"><rect x="1" y="1.5" width="8" height="6" rx="0.5"/><path d="M1 3.5h8 M6.5 8.5h3 M8 7v3"/></svg>
<!-- export to graphics -->
<div class="a" style="left:154px;top:86px;width:43px;height:35px;border:1px solid #e4e4e4;background:#fff"></div>
<svg style="left:168px;top:87px" width="14" height="14"><path d="M3 1.5h5.8l2.4 2.4v8.1H3z" fill="#fff" stroke="#dcdcdc" stroke-width="0.6"/><rect x="2" y="3.6" width="7" height="4.8" rx="0.6" fill="#2aa48a"/><path d="M3.3 6h4.4" stroke="#fff" stroke-width="0.6" opacity="0.7"/></svg>
<div class="a" style="left:154px;top:146px;width:43px;height:35px;border:1px solid #e4e4e4;background:#fff"></div>
<svg style="left:168px;top:147px" width="14" height="14"><path d="M3 1.5h5.8l2.4 2.4v8.1H3z" fill="#fff" stroke="#dcdcdc" stroke-width="0.6"/><rect x="2" y="3.6" width="7" height="4.8" rx="0.6" fill="#3a9ae8"/><path d="M3.3 6h4.4" stroke="#fff" stroke-width="0.6" opacity="0.7"/></svg>
<!-- ===== TEXTS ===== -->
<div class="t" style="left:15.6px;top:4.14px;font-size:6.8px;color:#fff;-webkit-text-stroke:0.05px currentColor;transform:scaleX(0.888);transform-origin:0 0">Wondershare EdrawMax</div>
<div class="t" style="left:14.4px;top:20.53px;font-size:6.7px;color:#fff;-webkit-text-stroke:0.05px currentColor;transform:scaleX(0.807);transform-origin:0 0">File</div>
<div class="t" style="left:53.2px;top:20.53px;font-size:6.7px;color:#fff;-webkit-text-stroke:0.05px currentColor;transform:scaleX(0.953);transform-origin:0 0">Home</div>
<div class="t" style="left:100px;top:20.53px;font-size:6.7px;color:#fff;-webkit-text-stroke:0.05px currentColor;transform:scaleX(0.884);transform-origin:0 0">Insert</div>
<div class="t" style="left:143.9px;top:20.63px;font-size:6.7px;color:#fff;-webkit-text-stroke:0.05px currentColor;transform:scaleX(0.902);transform-origin:0 0">Page Layout</div>
<div class="t" style="left:207px;top:20.63px;font-size:6.7px;color:#fff;-webkit-text-stroke:0.05px currentColor;transform:scaleX(0.890);transform-origin:0 0">View</div>
<div class="t" style="left:249px;top:20.63px;font-size:6.7px;color:#333;transform:scaleX(0.912);transform-origin:0 0">Symbols</div>
<div class="t" style="left:908.6px;top:5.07px;font-size:7px;color:#5a4020;font-weight:bold;transform:scaleX(1.024);transform-origin:0 0">1</div>
<div class="t" style="left:896px;top:18.83px;font-size:6.7px;color:#fff;font-weight:bold;transform:scaleX(0.820);transform-origin:0 0">Publish</div>
<div class="t" style="left:934px;top:18.83px;font-size:6.7px;color:#fff;font-weight:bold;transform:scaleX(0.774);transform-origin:0 0">Share</div>
<div class="t" style="left:378.2px;top:40.34px;font-size:6.8px;color:#c2c2c2;-webkit-text-stroke:0;transform:scaleX(0.929);transform-origin:0 0">Union</div>
<div class="t" style="left:423.7px;top:40.34px;font-size:6.8px;color:#c2c2c2;-webkit-text-stroke:0;transform:scaleX(0.926);transform-origin:0 0">Combine</div>
<div class="t" style="left:467.8px;top:40.34px;font-size:6.8px;color:#c2c2c2;-webkit-text-stroke:0;transform:scaleX(0.897);transform-origin:0 0">Subtract</div>
<div class="t" style="left:378.2px;top:56.14px;font-size:6.8px;color:#c2c2c2;-webkit-text-stroke:0;transform:scaleX(0.904);transform-origin:0 0">Fragment</div>
<div class="t" style="left:423.7px;top:56.14px;font-size:6.8px;color:#c2c2c2;-webkit-text-stroke:0;transform:scaleX(0.878);transform-origin:0 0">Intersect</div>
<div class="t" style="left:467.8px;top:56.14px;font-size:6.8px;color:#c2c2c2;-webkit-text-stroke:0;transform:scaleX(0.897);transform-origin:0 0">Subtract</div>
<div class="t" style="left:508.8px;top:50.64px;font-size:6.8px;color:#c2c2c2;-webkit-text-stroke:0;transform:scaleX(0.818);transform-origin:0 0">Text</div>
<div class="t" style="left:508.2px;top:58.64px;font-size:6.8px;color:#c2c2c2;-webkit-text-stroke:0;transform:scaleX(0.850);transform-origin:0 0">Tool</div>
<div class="t" style="left:534.9px;top:50.64px;font-size:6.8px;color:#c2c2c2;-webkit-text-stroke:0;transform:scaleX(0.910);transform-origin:0 0">Point</div>
<div class="t" style="left:535.7px;top:58.64px;font-size:6.8px;color:#c2c2c2;-webkit-text-stroke:0;transform:scaleX(0.850);transform-origin:0 0">Tool</div>
<div class="t" style="left:564.6px;top:50.64px;font-size:6.8px;color:#c2c2c2;-webkit-text-stroke:0;transform:scaleX(0.826);transform-origin:0 0">Save</div>
<div class="t" style="left:560.7px;top:58.64px;font-size:6.8px;color:#c2c2c2;-webkit-text-stroke:0;transform:scaleX(0.909);transform-origin:0 0">Symbol</div>
<div class="t" style="left:588.8px;top:53.54px;font-size:6.8px;color:#c2c2c2;-webkit-text-stroke:0;transform:scaleX(0.862);transform-origin:0 0">DataSheet</div>
<div class="t" style="left:622.1px;top:50.64px;font-size:6.8px;color:#c2c2c2;-webkit-text-stroke:0;transform:scaleX(0.871);transform-origin:0 0">Create Smart</div>
<div class="t" style="left:631.8px;top:58.64px;font-size:6.8px;color:#c2c2c2;-webkit-text-stroke:0;transform:scaleX(0.824);transform-origin:0 0">Shape</div>
<div class="t" style="left:13px;top:264.54px;font-size:6.8px;color:#333;transform:scaleX(0.928);transform-origin:0 0">UML Component Diagram</div>
<div class="t" style="left:13px;top:336.14px;font-size:6.8px;color:#333;transform:scaleX(0.917);transform-origin:0 0">UML Deployment Diagram</div>
<div class="t" style="left:12.8px;top:407.84px;font-size:6.8px;color:#333;transform:scaleX(0.893);transform-origin:0 0">UML Sequence Diagram</div>
<div class="t" style="left:12.8px;top:480.24px;font-size:6.8px;color:#333;transform:scaleX(0.872);transform-origin:0 0">UML Use Case Diagram</div>
<div class="t" style="left:334px;top:73.50px;font-size:6.5px;color:#1a6ee0;transform:scaleX(0.927);transform-origin:0 0">example14</div>
<div class="t" style="left:16.1px;top:70.80px;font-size:5.2px;color:#fff;-webkit-text-stroke:0.05px currentColor;transform:scaleX(0.857);transform-origin:0 0">New</div>
<div class="t" style="left:16.1px;top:86.00px;font-size:5.2px;color:#fff;-webkit-text-stroke:0.05px currentColor;transform:scaleX(0.874);transform-origin:0 0">Open</div>
<div class="t" style="left:16.1px;top:101.10px;font-size:5.2px;color:#fff;-webkit-text-stroke:0.05px currentColor;transform:scaleX(0.959);transform-origin:0 0">Import</div>
<div class="t" style="left:16.1px;top:116.30px;font-size:5.2px;color:#fff;-webkit-text-stroke:0.05px currentColor;transform:scaleX(0.895);transform-origin:0 0">Cloud Documents</div>
<div class="t" style="left:16.2px;top:131.10px;font-size:5.2px;color:#fff;-webkit-text-stroke:0.05px currentColor;transform:scaleX(0.850);transform-origin:0 0">Templates</div>
<div class="t" style="left:16.2px;top:146.10px;font-size:5.2px;color:#fff;-webkit-text-stroke:0.05px currentColor;transform:scaleX(0.913);transform-origin:0 0">Save</div>
<div class="t" style="left:16.2px;top:161.10px;font-size:5.2px;color:#fff;-webkit-text-stroke:0.05px currentColor;transform:scaleX(0.809);transform-origin:0 0">Save As</div>
<div class="t" style="left:16.2px;top:176.00px;font-size:5.2px;color:#fff;-webkit-text-stroke:0.05px currentColor;transform:scaleX(0.885);transform-origin:0 0">Export &amp; Send</div>
<div class="t" style="left:16.2px;top:191.00px;font-size:5.2px;color:#fff;-webkit-text-stroke:0.05px currentColor;transform:scaleX(0.853);transform-origin:0 0">Print</div>
<div class="t" style="left:23.3px;top:206.50px;font-size:5.2px;color:#fff;-webkit-text-stroke:0.05px currentColor;transform:scaleX(0.809);transform-origin:0 0">Exit</div>
<div class="t" style="left:41.8px;top:132.25px;font-size:3.6px;color:#fff;font-weight:bold;transform:scaleX(1.096);transform-origin:0 0">NEW</div>
<div class="t" style="left:68px;top:45.61px;font-size:7.2px;color:#222;font-weight:bold;transform:scaleX(0.966);transform-origin:0 0">Export</div>
<div class="t" style="left:80px;top:72.90px;font-size:5.2px;color:#3a7be0;-webkit-text-stroke:0.08px currentColor;transform:scaleX(0.852);transform-origin:0 0">Graphics</div>
<div class="t" style="left:80px;top:89.30px;font-size:5.2px;color:#444;-webkit-text-stroke:0.08px currentColor;transform:scaleX(0.776);transform-origin:0 0">PDF, PS, EPS</div>
<div class="t" style="left:80px;top:104.40px;font-size:5.2px;color:#444;-webkit-text-stroke:0.08px currentColor;transform:scaleX(0.965);transform-origin:0 0">Office</div>
<div class="t" style="left:80px;top:119.90px;font-size:5.2px;color:#444;-webkit-text-stroke:0.08px currentColor;transform:scaleX(1.031);transform-origin:0 0">Html</div>
<div class="t" style="left:80px;top:135.40px;font-size:5.2px;color:#444;-webkit-text-stroke:0.08px currentColor;transform:scaleX(0.748);transform-origin:0 0">SVG</div>
<div class="t" style="left:80px;top:151.20px;font-size:5.2px;color:#3a7be0;-webkit-text-stroke:0.08px currentColor;transform:scaleX(0.896);transform-origin:0 0">Visio</div>
<div class="t" style="left:67.9px;top:198.91px;font-size:7.2px;color:#222;font-weight:bold;transform:scaleX(0.916);transform-origin:0 0">Send</div>
<div class="t" style="left:80.1px;top:222.50px;font-size:5.2px;color:#444;-webkit-text-stroke:0.08px currentColor;transform:scaleX(0.863);transform-origin:0 0">Send Email</div>
<div class="t" style="left:153.9px;top:46.11px;font-size:7.2px;color:#222;font-weight:bold;transform:scaleX(0.946);transform-origin:0 0">Export to Graphics</div>
<div class="t" style="left:153.9px;top:71.94px;font-size:4.8px;color:#333;-webkit-text-stroke:0.08px currentColor;transform:scaleX(0.947);transform-origin:0 0">Save image files, such as jpg, jpeg, png, bmp, gif.</div>
<div class="t" style="left:166.5px;top:105.99px;font-size:4.5px;color:#555;-webkit-text-stroke:0.08px currentColor;transform:scaleX(0.982);transform-origin:0 0">Graphics</div>
<div class="t" style="left:156.3px;top:112.99px;font-size:4.5px;color:#555;-webkit-text-stroke:0.08px currentColor;transform:scaleX(0.913);transform-origin:0 0">"*.jpg,"*.jpeg,"*.png...</div>
<div class="t" style="left:154.2px;top:131.94px;font-size:4.8px;color:#333;-webkit-text-stroke:0.08px currentColor;transform:scaleX(0.958);transform-origin:0 0">Save to the graphics file to multiple page tiff file.</div>
<div class="t" style="left:171.8px;top:165.59px;font-size:4.5px;color:#555;-webkit-text-stroke:0.08px currentColor;transform:scaleX(1.130);transform-origin:0 0">Tiff</div>
<div class="t" style="left:168.6px;top:172.89px;font-size:4.5px;color:#555;-webkit-text-stroke:0.08px currentColor;transform:scaleX(1.199);transform-origin:0 0">(*.tiff)</div>
<div class="t" style="left:916px;top:74.77px;font-size:7px;color:#222;font-weight:bold;transform:scaleX(0.957);transform-origin:0 0">Theme</div>
<div class="t" style="left:957.6px;top:99.47px;font-size:6.3px;color:#444;transform:scaleX(1.018);transform-origin:0 0">Novel</div>
<div class="t" style="left:957.6px;top:116.27px;font-size:6.3px;color:#444;transform:scaleX(0.999);transform-origin:0 0">Arial</div>
<div class="t" style="left:957.6px;top:132.57px;font-size:6.3px;color:#444;transform:scaleX(0.911);transform-origin:0 0">General 1</div>
<div class="t" style="left:957.6px;top:149.57px;font-size:6.3px;color:#444;transform:scaleX(0.885);transform-origin:0 0">Save The...</div>
<div class="t" style="left:868.1px;top:188.05px;font-size:6.2px;color:#333;transform:scaleX(0.960);transform-origin:0 0">Theme</div>
<div class="t" style="left:901.6px;top:188.05px;font-size:6.2px;color:#333;transform:scaleX(1.020);transform-origin:0 0">Color</div>
<div class="t" style="left:926.9px;top:188.05px;font-size:6.2px;color:#333;transform:scaleX(1.015);transform-origin:0 0">Connector</div>
<div class="t" style="left:967.9px;top:188.05px;font-size:6.2px;color:#333;transform:scaleX(0.942);transform-origin:0 0">Text</div>
<div class="t" style="left:28.6px;top:529.07px;font-size:6.3px;color:#333;transform:scaleX(0.935);transform-origin:0 0">Page-1</div>
<div class="t" style="left:120px;top:529.07px;font-size:6.3px;color:#1a73e8;transform:scaleX(0.945);transform-origin:0 0">Page-1</div>
<div class="t" style="left:828px;top:529.15px;font-size:6.2px;color:#333;transform:scaleX(0.949);transform-origin:0 0">Focus</div>
<div class="t" style="left:934.4px;top:529.15px;font-size:6.2px;color:#333;transform:scaleX(0.922);transform-origin:0 0">100%</div>
<div class="t" style="left:946.8px;top:236.74px;font-size:6.1px;color:#333">Novel</div>
<div class="t" style="left:946.8px;top:251.34px;font-size:6.1px;color:#333">Charm</div>
<div class="t" style="left:946.8px;top:265.94px;font-size:6.1px;color:#333">Antique</div>
<div class="t" style="left:946.8px;top:280.54px;font-size:6.1px;color:#333">Fresh</div>
<div class="t" style="left:946.8px;top:295.14px;font-size:6.1px;color:#333">Live</div>
<div class="t" style="left:946.8px;top:309.74px;font-size:6.1px;color:#333">Crystal</div>
<div class="t" style="left:946.8px;top:324.34px;font-size:6.1px;color:#333">Broad</div>
<div class="t" style="left:946.8px;top:338.94px;font-size:6.1px;color:#333">Sprinkle</div>
<div class="t" style="left:946.8px;top:353.54px;font-size:6.1px;color:#333">Tranquil</div>
<div class="t" style="left:946.8px;top:368.14px;font-size:6.1px;color:#333">Opulent</div>
<div class="t" style="left:946.8px;top:382.74px;font-size:6.1px;color:#333">Placid</div>
<div class="t" style="left:946.8px;top:397.34px;font-size:6.1px;color:#333">Natural</div>
<div class="t" style="left:946.8px;top:411.94px;font-size:6.1px;color:#333">Dream</div>
<div class="t" style="left:946.8px;top:426.54px;font-size:6.1px;color:#333">Garden</div>
<div class="t" style="left:946.8px;top:441.14px;font-size:6.1px;color:#333">Candy</div>
<div class="t" style="left:946.8px;top:455.74px;font-size:6.1px;color:#333">Bloss...</div>
<div class="t" style="left:946.8px;top:470.34px;font-size:6.1px;color:#333">Elegant</div>
<div class="t" style="left:946.8px;top:484.94px;font-size:6.1px;color:#333">BPMN</div>
<div class="t" style="left:946.8px;top:499.54px;font-size:6.1px;color:#333">Jolly</div>
<div class="t" style="left:946.8px;top:514.14px;font-size:6.1px;color:#333">Town</div>
<!-- red arrows -->
<svg style="left:0;top:0" width="1000" height="541"><g fill="#e8202a">
<path d="M295.57 2.75 L224.78 7.11 L225.47 4.15 L216.80 9.00 L226.08 12.53 L224.97 9.70 L295.63 3.65Z"/>
<path d="M100.52 9.96 L51.95 17.63 L52.26 14.23 L43.70 20.40 L53.85 23.29 L52.40 20.19 L100.68 10.84Z"/>
<path d="M743.97 16.05 L863.43 25.70 L862.31 28.63 L871.60 25.00 L862.94 20.05 L863.62 23.11 L744.03 15.15Z"/>
<path d="M190.31 51.19 L151.12 68.24 L150.73 65.23 L144.30 72.80 L154.23 72.86 L152.20 70.60 L190.69 52.01Z"/>
<path d="M10.11 139.05 L40.22 164.86 L37.68 166.53 L47.30 169.00 L43.01 160.04 L41.87 162.86 L10.69 138.35Z"/>
</g></svg>
</body></html>
